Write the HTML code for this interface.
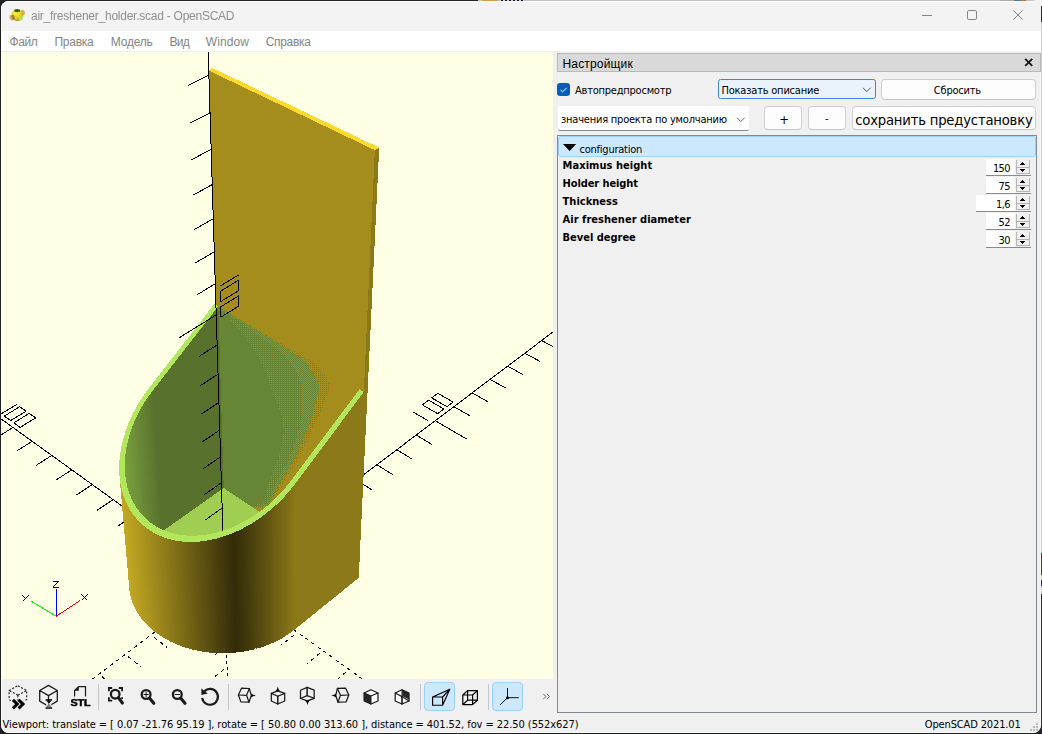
<!DOCTYPE html>
<html lang="ru"><head><meta charset="utf-8"><title>air_freshener_holder.scad - OpenSCAD</title>
<style>
html,body{margin:0;padding:0}
body{width:1042px;height:734px;overflow:hidden;background:#1f2023;position:relative;font-family:"Liberation Sans","DejaVu Sans",sans-serif;font-size:11px;color:#000}
.abs{position:absolute}
#top0{position:absolute;left:0;top:0;width:1042px;height:1px;background:#222326}
#win{position:absolute;left:1px;top:1px;width:1040px;height:732px;border-radius:8px;background:#f0f0f0;overflow:hidden;box-shadow:inset 0 0 0 1px #fbfbfb}
#titlebar{position:absolute;left:0;top:0;width:1040px;height:30px;background:#f3f3f3;box-shadow:inset 1px 1px 0 0 #fcfcfc;border-radius:8px 8px 0 0}
#menubar{position:absolute;left:0;top:30px;width:1040px;height:20px;background:#fff}
svg text{text-rendering:geometricPrecision}
.t{position:absolute;white-space:pre;line-height:1;transform-origin:0 0}
.gl{position:absolute;left:0px;top:51px}
.tb{position:absolute;top:681px;width:31px;height:29px;box-sizing:border-box;border-radius:4px}
.tb.on{background:#cce8ff;border:1px solid #99d1ff}
.tb svg{position:absolute;left:3px;top:2px}
.sep{position:absolute;top:683px;width:1px;height:26px;background:#c5c5c5}
.btn{position:absolute;box-sizing:border-box;background:#fdfdfd;border:1px solid #d0d0d0;border-bottom-color:#c4c4c4;border-radius:4px}
.spin{position:absolute;height:15px;background:#fff;border-bottom:1px solid #8a8a8a;box-sizing:content-box}
.spb{position:absolute;right:1px;top:1px;width:13px;height:14px;background:#f0f0f0;border:1px solid #c9c9c9;box-sizing:border-box}

</style></head>
<body>
<div id="top0"></div>
<div class="abs" style="left:478px;top:0;width:564px;height:1px;background:#c2c2c2"></div>
<div class="abs" style="left:482px;top:0;width:16px;height:1px;background:#c9a13f"></div>
<div class="abs" style="left:501px;top:0;width:23px;height:1px;background:repeating-linear-gradient(90deg,#1d1830 0 2px,#cfcfcf 2px 4px)"></div>
<div class="abs" style="left:1000px;top:0;width:14px;height:1px;background:#a9a9a9"></div>
<div class="abs" style="left:1014px;top:0;width:12px;height:1px;background:#5d7d96"></div>
<div class="abs" style="left:1022px;top:0;width:3px;height:1px;background:#c9761a"></div>
<div class="abs" style="left:1030px;top:0;width:12px;height:7px;background:#f4f4f4"></div>
<div class="abs" style="left:1041px;top:1px;width:1px;height:733px;background:linear-gradient(180deg,#f4f4f4 0 5px,#2a2a2d 5px 21px,#cdcdcd 21px 552px,#6b2c2c 552px 574px,#cdcdcd 574px 579px,#27305a 579px 585px,#cdcdcd 585px 593px,#2a2a2d 593px)"></div>
<div class="abs" style="left:1030px;top:0px;width:11px;height:10px;box-sizing:border-box;border-top:1px solid #c4c4c4;border-right:1px solid #b5b5b5;border-top-right-radius:9px"></div>
<div id="win">
<div id="titlebar">
<svg class="abs" style="left:7px;top:6px" width="20" height="18" viewBox="8 7 20 18">
<defs><radialGradient id="ball" cx="0.4" cy="0.35" r="0.7"><stop offset="0" stop-color="#fff23a"/><stop offset="0.6" stop-color="#e6cf1c"/><stop offset="1" stop-color="#8a7a10"/></radialGradient></defs>
<ellipse cx="11.8" cy="17.6" rx="2.4" ry="2.9" fill="#d6a570" opacity="0.9" transform="rotate(-25 11.8 17.6)"/>
<ellipse cx="22.9" cy="12.3" rx="2.1" ry="2.6" fill="#d6a570" opacity="0.9" transform="rotate(-25 22.9 12.3)"/>
<circle cx="17.3" cy="15" r="6" fill="url(#ball)"/>
<ellipse cx="17.1" cy="10.6" rx="3" ry="1.6" fill="#3f6314"/>
<ellipse cx="21" cy="17.8" rx="1.9" ry="2.8" fill="#b5e24e" transform="rotate(35 21 17.8)"/>
<ellipse cx="13.2" cy="17.2" rx="1.5" ry="2.4" fill="#8c8a2a" transform="rotate(-20 13.2 17.2)"/>
</svg>
<svg class="abs" style="left:915px;top:5px" width="120" height="20" viewBox="916 6 120 20"><g fill="none" stroke="#858585" stroke-width="1">
<path d="M922 15.5 H932"/><rect x="967.5" y="10.5" width="9" height="9" rx="1.3"/><path d="M1013.3 10.3 L1022.7 19.7 M1022.7 10.3 L1013.3 19.7"/></g></svg>
</div>
<div id="menubar"></div>
<svg class="gl" width="552" height="627" viewBox="0 0 552 627" shape-rendering="crispEdges">
<defs>
<pattern id="pa" width="2" height="2" patternUnits="userSpaceOnUse"><rect width="2" height="2" fill="#678635"/><rect x="0" y="0" width="1" height="1" fill="#a48d1d"/></pattern>
<pattern id="pb" width="2" height="2" patternUnits="userSpaceOnUse"><rect width="2" height="2" fill="#678635"/><rect x="0" y="0" width="1" height="1" fill="#a48d1d"/><rect x="1" y="1" width="1" height="1" fill="#a48d1d"/></pattern>
<pattern id="pc" width="2" height="2" patternUnits="userSpaceOnUse"><rect width="2" height="2" fill="#a48d1d"/><rect x="1" y="1" width="1" height="1" fill="#678635"/></pattern>

<clipPath id="zc"><path d="M-10,-10 H600 V700 H-10 Z M123.76,413.72 L123.77,415.34 L123.81,416.96 L123.88,418.58 L123.98,420.18 L124.10,421.77 L124.25,423.35 L124.43,424.92 L124.65,426.48 L124.88,428.03 L125.15,429.56 L125.45,431.09 L125.77,432.60 L126.13,434.09 L126.51,435.58 L126.92,437.04 L127.36,438.50 L127.83,439.93 L128.32,441.36 L128.85,442.76 L129.40,444.15 L129.98,445.52 L130.59,446.88 L131.22,448.21 L131.88,449.53 L132.57,450.83 L133.29,452.10 L134.03,453.36 L134.81,454.60 L135.60,455.82 L136.43,457.01 L137.28,458.19 L138.15,459.34 L139.06,460.47 L139.98,461.58 L140.94,462.67 L141.91,463.73 L142.92,464.76 L143.94,465.78 L145.00,466.77 L146.07,467.73 L147.17,468.67 L148.29,469.58 L149.44,470.47 L150.61,471.33 L151.80,472.16 L153.01,472.97 L154.25,473.75 L155.50,474.50 L156.78,475.22 L158.08,475.92 L159.40,476.59 L160.74,477.23 L162.09,477.84 L163.47,478.42 L164.87,478.97 L166.28,479.49 L167.71,479.98 L169.16,480.45 L170.63,480.88 L172.11,481.28 L173.61,481.65 L175.12,481.99 L176.65,482.30 L178.20,482.58 L179.75,482.83 L181.33,483.05 L182.91,483.23 L184.51,483.38 L186.12,483.51 L187.74,483.60 L189.37,483.65 L191.02,483.68 L192.67,483.68 L194.33,483.64 L196.01,483.57 L197.69,483.47 L199.38,483.34 L201.07,483.17 L202.78,482.97 L204.49,482.74 L206.20,482.48 L207.92,482.19 L209.65,481.87 L211.37,481.51 L213.11,481.12 L214.84,480.71 L216.58,480.25 L218.32,479.77 L220.06,479.26 L221.80,478.72 L223.54,478.14 L225.28,477.54 L227.02,476.90 L228.76,476.24 L230.49,475.54 L232.23,474.82 L233.96,474.06 L235.68,473.28 L237.40,472.46 L239.11,471.62 L240.82,470.75 L242.53,469.85 L244.22,468.92 L245.91,467.97 L247.59,466.98 L249.26,465.97 L250.92,464.94 L252.57,463.87 L254.21,462.78 L255.85,461.67 L257.46,460.53 L259.07,459.36 L260.67,458.17 L262.25,456.96 L263.81,455.72 L265.37,454.46 L266.91,453.18 L268.43,451.87 L269.94,450.54 L271.43,449.20 L272.90,447.82 L274.36,446.43 L275.80,445.02 L277.22,443.59 L278.62,442.14 L280.00,440.67 L281.37,439.18 L282.71,437.68 L284.03,436.16 L285.34,434.62 L286.62,433.06 L287.88,431.49 L289.11,429.91 L290.33,428.31 L290.33,428.31 L358.37,337.36 L600,337.36 L600,700 L-10,700 L-10,413.72 Z" clip-rule="evenodd"/></clipPath>
</defs>
<rect width="552" height="627" fill="#ffffe5"/>
<g stroke="#000" stroke-width="1" fill="none">
<line x1="223.36" y1="527.68" x2="865.03" y2="43.99" />
<line x1="223.36" y1="527.68" x2="-426.46" y2="59.87" />
<line x1="223.36" y1="527.68" x2="239.22" y2="539.10" />
<line x1="223.36" y1="527.68" x2="207.45" y2="539.67" />
<line x1="246.68" y1="510.10" x2="262.52" y2="521.26" />
<line x1="200.10" y1="510.93" x2="184.19" y2="522.66" />
<line x1="269.45" y1="492.94" x2="285.28" y2="503.83" />
<line x1="177.36" y1="494.56" x2="161.44" y2="506.03" />
<line x1="291.70" y1="476.17" x2="307.51" y2="486.81" />
<line x1="155.11" y1="478.54" x2="139.19" y2="489.76" />
<line x1="313.45" y1="459.77" x2="329.24" y2="470.18" />
<line x1="133.34" y1="462.87" x2="117.43" y2="473.85" />
<line x1="334.71" y1="443.75" x2="350.48" y2="453.92" />
<line x1="112.04" y1="447.54" x2="96.14" y2="458.28" />
<line x1="355.50" y1="428.07" x2="371.24" y2="438.02" />
<line x1="91.19" y1="432.52" x2="75.30" y2="443.04" />
<line x1="375.83" y1="412.75" x2="391.54" y2="422.48" />
<line x1="70.77" y1="417.83" x2="54.90" y2="428.12" />
<line x1="395.73" y1="397.75" x2="411.40" y2="407.27" />
<line x1="50.78" y1="403.44" x2="34.93" y2="413.52" />
<line x1="415.20" y1="383.07" x2="430.84" y2="392.39" />
<line x1="31.20" y1="389.34" x2="15.37" y2="399.21" />
<line x1="434.25" y1="368.71" x2="465.67" y2="387.07" />
<line x1="12.01" y1="375.53" x2="-19.83" y2="395.02" />
<line x1="452.91" y1="354.65" x2="468.47" y2="363.58" />
<line x1="-6.79" y1="361.99" x2="-22.57" y2="371.47" />
<line x1="471.18" y1="340.88" x2="486.70" y2="349.62" />
<line x1="-25.21" y1="348.73" x2="-40.96" y2="358.02" />
<line x1="489.07" y1="327.39" x2="504.55" y2="335.95" />
<line x1="-43.28" y1="335.72" x2="-59.00" y2="344.83" />
<line x1="506.60" y1="314.18" x2="522.03" y2="322.57" />
<line x1="-60.99" y1="322.97" x2="-76.68" y2="331.91" />
<line x1="523.77" y1="301.23" x2="539.16" y2="309.45" />
<line x1="-78.36" y1="310.47" x2="-94.01" y2="319.23" />
<line x1="540.61" y1="288.54" x2="555.95" y2="296.60" />
<line x1="-95.39" y1="298.20" x2="-111.01" y2="306.80" />
<line x1="557.11" y1="276.10" x2="572.40" y2="284.00" />
<line x1="-112.11" y1="286.17" x2="-127.69" y2="294.60" />
<line x1="573.29" y1="263.91" x2="588.53" y2="271.65" />
<line x1="-128.51" y1="274.37" x2="-144.05" y2="282.64" />
<line x1="589.15" y1="251.95" x2="604.35" y2="259.54" />
<line x1="-144.60" y1="262.78" x2="-160.11" y2="270.90" />
<line x1="604.71" y1="240.22" x2="635.19" y2="255.21" />
<line x1="-160.40" y1="251.41" x2="-191.53" y2="267.45" />
<line x1="619.98" y1="228.71" x2="635.07" y2="236.02" />
<line x1="-175.91" y1="240.24" x2="-191.33" y2="248.06" />
<line x1="634.96" y1="217.42" x2="650.00" y2="224.59" />
<line x1="-191.14" y1="229.28" x2="-206.52" y2="236.96" />
<line x1="649.66" y1="206.34" x2="664.65" y2="213.37" />
<line x1="-206.10" y1="218.51" x2="-221.43" y2="226.05" />
<line x1="664.09" y1="195.46" x2="679.02" y2="202.37" />
<line x1="-220.79" y1="207.93" x2="-236.08" y2="215.34" />
<line x1="678.25" y1="184.78" x2="693.13" y2="191.57" />
<line x1="-235.22" y1="197.54" x2="-250.46" y2="204.82" />
<line x1="692.16" y1="174.30" x2="706.99" y2="180.96" />
<line x1="-249.40" y1="187.33" x2="-264.60" y2="194.49" />
<line x1="705.82" y1="164.00" x2="720.59" y2="170.54" />
<line x1="-263.34" y1="177.30" x2="-278.49" y2="184.33" />
<line x1="719.23" y1="153.89" x2="733.95" y2="160.32" />
<line x1="-277.03" y1="167.44" x2="-292.13" y2="174.35" />
<line x1="732.41" y1="143.96" x2="747.07" y2="150.27" />
<line x1="-290.49" y1="157.75" x2="-305.55" y2="164.54" />
<line x1="745.36" y1="134.20" x2="774.73" y2="146.67" />
<line x1="-303.73" y1="148.22" x2="-333.92" y2="161.66" />
<line x1="758.08" y1="124.61" x2="772.63" y2="130.70" />
<line x1="-316.74" y1="138.85" x2="-331.70" y2="145.42" />
<line x1="770.59" y1="115.18" x2="785.07" y2="121.17" />
<line x1="-329.54" y1="129.64" x2="-344.45" y2="136.10" />
<line x1="782.88" y1="105.92" x2="797.31" y2="111.80" />
<line x1="-342.13" y1="120.58" x2="-356.99" y2="126.93" />
<line x1="794.96" y1="96.81" x2="809.33" y2="102.60" />
<line x1="-354.51" y1="111.66" x2="-369.32" y2="117.91" />
<line x1="806.84" y1="87.85" x2="821.16" y2="93.54" />
<line x1="-366.69" y1="102.89" x2="-381.45" y2="109.04" />
<line x1="818.53" y1="79.05" x2="832.78" y2="84.64" />
<line x1="-378.68" y1="94.27" x2="-393.38" y2="100.32" />
<line x1="830.02" y1="70.39" x2="844.22" y2="75.89" />
<line x1="-390.48" y1="85.77" x2="-405.13" y2="91.73" />
<line x1="841.32" y1="61.87" x2="855.46" y2="67.28" />
<line x1="-402.08" y1="77.42" x2="-416.69" y2="83.28" />
<line x1="852.44" y1="53.48" x2="866.53" y2="58.81" />
<line x1="-413.51" y1="69.19" x2="-428.06" y2="74.96" />
<line x1="411.88" y1="359.83" x2="427.22" y2="368.82" />
<line x1="421.34" y1="352.83" x2="427.60" y2="348.20" />
<line x1="427.60" y1="348.20" x2="442.92" y2="357.04" />
<line x1="442.92" y1="357.04" x2="436.67" y2="361.73" />
<line x1="436.67" y1="361.73" x2="421.34" y2="352.83" />
<line x1="430.71" y1="345.90" x2="436.90" y2="341.32" />
<line x1="436.90" y1="341.32" x2="452.20" y2="350.07" />
<line x1="452.20" y1="350.07" x2="446.02" y2="354.71" />
<line x1="446.02" y1="354.71" x2="430.71" y2="345.90" />
<line x1="583.45" y1="232.95" x2="588.63" y2="229.12" />
<line x1="588.63" y1="229.12" x2="594.20" y2="231.85" />
<line x1="594.20" y1="231.85" x2="589.02" y2="235.70" />
<line x1="589.02" y1="235.70" x2="598.37" y2="240.31" />
<line x1="598.37" y1="240.31" x2="603.53" y2="236.43" />
<line x1="591.20" y1="227.22" x2="596.33" y2="223.42" />
<line x1="596.33" y1="223.42" x2="611.21" y2="230.67" />
<line x1="611.21" y1="230.67" x2="606.10" y2="234.51" />
<line x1="606.10" y1="234.51" x2="591.20" y2="227.22" />
<line x1="598.88" y1="221.54" x2="603.96" y2="217.78" />
<line x1="603.96" y1="217.78" x2="618.82" y2="224.95" />
<line x1="618.82" y1="224.95" x2="613.76" y2="228.76" />
<line x1="613.76" y1="228.76" x2="598.88" y2="221.54" />
<line x1="725.17" y1="128.14" x2="729.49" y2="124.95" />
<line x1="729.49" y1="124.95" x2="743.88" y2="131.05" />
<line x1="743.88" y1="131.05" x2="739.58" y2="134.28" />
<line x1="730.56" y1="130.44" x2="734.87" y2="127.23" />
<line x1="731.64" y1="123.36" x2="735.92" y2="120.20" />
<line x1="735.92" y1="120.20" x2="750.28" y2="126.24" />
<line x1="750.28" y1="126.24" x2="746.02" y2="129.44" />
<line x1="746.02" y1="129.44" x2="731.64" y2="123.36" />
<line x1="738.05" y1="118.62" x2="742.29" y2="115.49" />
<line x1="742.29" y1="115.49" x2="756.63" y2="121.48" />
<line x1="756.63" y1="121.48" x2="752.40" y2="124.65" />
<line x1="752.40" y1="124.65" x2="738.05" y2="118.62" />
<line x1="844.21" y1="40.11" x2="849.40" y2="42.05" />
<line x1="849.40" y1="42.05" x2="853.04" y2="39.34" />
<line x1="847.87" y1="37.41" x2="861.71" y2="42.57" />
<line x1="849.69" y1="36.07" x2="853.31" y2="33.38" />
<line x1="853.31" y1="33.38" x2="867.13" y2="38.50" />
<line x1="867.13" y1="38.50" x2="863.52" y2="41.21" />
<line x1="863.52" y1="41.21" x2="849.69" y2="36.07" />
<line x1="855.12" y1="32.05" x2="858.72" y2="29.39" />
<line x1="858.72" y1="29.39" x2="872.50" y2="34.47" />
<line x1="872.50" y1="34.47" x2="868.92" y2="37.15" />
<line x1="868.92" y1="37.15" x2="855.12" y2="32.05" />
<line x1="34.64" y1="365.87" x2="28.28" y2="361.38" />
<line x1="28.28" y1="361.38" x2="12.75" y2="370.85" />
<line x1="12.75" y1="370.85" x2="19.11" y2="375.41" />
<line x1="19.11" y1="375.41" x2="34.64" y2="365.87" />
<line x1="25.11" y1="359.14" x2="18.81" y2="354.69" />
<line x1="18.81" y1="354.69" x2="3.30" y2="364.07" />
<line x1="3.30" y1="364.07" x2="9.59" y2="368.59" />
<line x1="9.59" y1="368.59" x2="25.11" y2="359.14" />
<line x1="15.68" y1="352.48" x2="0.17" y2="361.83" />
<line x1="-138.72" y1="243.44" x2="-143.98" y2="239.73" />
<line x1="-143.98" y1="239.73" x2="-159.18" y2="247.55" />
<line x1="-159.18" y1="247.55" x2="-153.94" y2="251.31" />
<line x1="-153.94" y1="251.31" x2="-138.72" y2="243.44" />
<line x1="-146.59" y1="237.89" x2="-151.80" y2="234.21" />
<line x1="-151.80" y1="234.21" x2="-166.99" y2="241.96" />
<line x1="-166.99" y1="241.96" x2="-161.79" y2="245.68" />
<line x1="-161.79" y1="245.68" x2="-146.59" y2="237.89" />
<line x1="-154.39" y1="232.38" x2="-159.55" y2="228.74" />
<line x1="-159.55" y1="228.74" x2="-165.21" y2="231.61" />
<line x1="-165.21" y1="231.61" x2="-160.06" y2="235.27" />
<line x1="-160.06" y1="235.27" x2="-169.57" y2="240.10" />
<line x1="-169.57" y1="240.10" x2="-174.72" y2="236.41" />
<line x1="-283.01" y1="141.54" x2="-287.42" y2="138.43" />
<line x1="-287.42" y1="138.43" x2="-302.20" y2="144.99" />
<line x1="-302.20" y1="144.99" x2="-297.81" y2="148.14" />
<line x1="-297.81" y1="148.14" x2="-283.01" y2="141.54" />
<line x1="-289.62" y1="136.88" x2="-294.00" y2="133.79" />
<line x1="-294.00" y1="133.79" x2="-308.75" y2="140.30" />
<line x1="-308.75" y1="140.30" x2="-304.39" y2="143.42" />
<line x1="-304.39" y1="143.42" x2="-289.62" y2="136.88" />
<line x1="-296.17" y1="132.25" x2="-300.51" y2="129.19" />
<line x1="-300.51" y1="129.19" x2="-315.24" y2="135.64" />
<line x1="-315.24" y1="135.64" x2="-310.92" y2="138.74" />
<line x1="-301.68" y1="134.68" x2="-306.01" y2="131.60" />
<line x1="-404.98" y1="55.41" x2="-408.74" y2="52.76" />
<line x1="-408.74" y1="52.76" x2="-423.03" y2="58.34" />
<line x1="-423.03" y1="58.34" x2="-419.29" y2="61.03" />
<line x1="-419.29" y1="61.03" x2="-404.98" y2="55.41" />
<line x1="-410.61" y1="51.44" x2="-414.33" y2="48.80" />
<line x1="-414.33" y1="48.80" x2="-428.60" y2="54.35" />
<line x1="-428.60" y1="54.35" x2="-424.89" y2="57.01" />
<line x1="-424.89" y1="57.01" x2="-410.61" y2="51.44" />
<line x1="-416.19" y1="47.49" x2="-421.52" y2="49.56" />
<line x1="-421.52" y1="49.56" x2="-425.21" y2="46.94" />
<line x1="-419.89" y1="44.88" x2="-434.13" y2="50.38" />
</g>
<g stroke="#000" stroke-width="1" fill="none">
<line x1="223.36" y1="527.68" x2="-572.21" y2="1127.37" stroke-dasharray="3.76 3.76" stroke-dashoffset="3.76"/>
<line x1="223.36" y1="527.68" x2="1001.79" y2="1088.07" stroke-dasharray="3.70 3.70" stroke-dashoffset="3.70"/>
<line x1="223.36" y1="527.68" x2="230.66" y2="765.78" stroke-dasharray="3.00 3.00" stroke-dashoffset="3.00"/>
<line x1="223.36" y1="527.68" x2="239.22" y2="539.10" stroke-dasharray="3.70 3.70" stroke-dashoffset="3.70"/>
<line x1="223.36" y1="527.68" x2="207.45" y2="539.67" stroke-dasharray="3.76 3.76" stroke-dashoffset="3.76"/>
<line x1="223.36" y1="527.68" x2="207.45" y2="539.67" stroke-dasharray="3.76 3.76" stroke-dashoffset="3.76"/>
<line x1="199.49" y1="545.67" x2="215.36" y2="557.37" stroke-dasharray="3.73 3.73" stroke-dashoffset="3.73"/>
<line x1="247.15" y1="544.80" x2="231.25" y2="557.08" stroke-dasharray="3.79 3.79" stroke-dashoffset="3.79"/>
<line x1="224.06" y1="550.32" x2="208.36" y2="562.34" stroke-dasharray="3.78 3.78" stroke-dashoffset="3.78"/>
<line x1="175.04" y1="564.11" x2="190.91" y2="576.09" stroke-dasharray="3.76 3.76" stroke-dashoffset="3.76"/>
<line x1="271.49" y1="562.33" x2="255.60" y2="574.88" stroke-dasharray="3.82 3.82" stroke-dashoffset="3.82"/>
<line x1="224.73" y1="572.38" x2="209.25" y2="584.41" stroke-dasharray="3.80 3.80" stroke-dashoffset="3.80"/>
<line x1="149.98" y1="582.99" x2="165.85" y2="595.27" stroke-dasharray="3.79 3.79" stroke-dashoffset="3.79"/>
<line x1="296.40" y1="580.26" x2="280.53" y2="593.11" stroke-dasharray="3.86 3.86" stroke-dashoffset="3.86"/>
<line x1="225.39" y1="593.87" x2="210.11" y2="605.90" stroke-dasharray="3.82 3.82" stroke-dashoffset="3.82"/>
<line x1="124.31" y1="602.35" x2="140.17" y2="614.93" stroke-dasharray="3.83 3.83" stroke-dashoffset="3.83"/>
<line x1="321.90" y1="598.62" x2="306.05" y2="611.78" stroke-dasharray="3.90 3.90" stroke-dashoffset="3.90"/>
<line x1="226.03" y1="614.81" x2="210.95" y2="626.85" stroke-dasharray="3.84 3.84" stroke-dashoffset="3.84"/>
<line x1="97.98" y1="622.19" x2="113.83" y2="635.10" stroke-dasharray="3.87 3.87" stroke-dashoffset="3.87"/>
<line x1="348.01" y1="617.41" x2="332.19" y2="630.89" stroke-dasharray="3.94 3.94" stroke-dashoffset="3.94"/>
<line x1="226.66" y1="635.23" x2="211.77" y2="647.27" stroke-dasharray="3.86 3.86" stroke-dashoffset="3.86"/>
<line x1="70.98" y1="642.54" x2="86.82" y2="655.78" stroke-dasharray="3.91 3.91" stroke-dashoffset="3.91"/>
<line x1="374.75" y1="636.66" x2="358.97" y2="650.47" stroke-dasharray="3.99 3.99" stroke-dashoffset="3.99"/>
<line x1="227.27" y1="655.14" x2="212.57" y2="667.19" stroke-dasharray="3.88 3.88" stroke-dashoffset="3.88"/>
<line x1="43.29" y1="663.42" x2="59.10" y2="677.00" stroke-dasharray="3.96 3.96" stroke-dashoffset="3.96"/>
<line x1="402.15" y1="656.38" x2="386.41" y2="670.54" stroke-dasharray="4.03 4.03" stroke-dashoffset="4.03"/>
<line x1="227.86" y1="674.57" x2="213.35" y2="686.61" stroke-dasharray="3.90 3.90" stroke-dashoffset="3.90"/>
<line x1="14.87" y1="684.84" x2="30.65" y2="698.79" stroke-dasharray="4.00 4.00" stroke-dashoffset="4.00"/>
<line x1="430.22" y1="676.60" x2="414.54" y2="691.10" stroke-dasharray="4.09 4.09" stroke-dashoffset="4.09"/>
<line x1="228.44" y1="693.53" x2="214.11" y2="705.56" stroke-dasharray="3.92 3.92" stroke-dashoffset="3.92"/>
<line x1="-14.31" y1="706.83" x2="1.44" y2="721.15" stroke-dasharray="4.06 4.06" stroke-dashoffset="4.06"/>
<line x1="459.01" y1="697.32" x2="443.38" y2="712.19" stroke-dasharray="4.14 4.14" stroke-dashoffset="4.14"/>
<line x1="229.01" y1="712.04" x2="214.86" y2="724.05" stroke-dasharray="3.94 3.94" stroke-dashoffset="3.94"/>
<line x1="-44.27" y1="729.42" x2="-12.60" y2="759.10" stroke-dasharray="4.11 4.11" stroke-dashoffset="4.11"/>
<line x1="488.52" y1="718.57" x2="457.11" y2="749.36" stroke-dasharray="4.20 4.20" stroke-dashoffset="4.20"/>
<line x1="229.56" y1="730.11" x2="201.40" y2="754.28" stroke-dasharray="3.95 3.95" stroke-dashoffset="3.95"/>
<line x1="-75.05" y1="752.62" x2="-59.40" y2="767.73" stroke-dasharray="4.17 4.17" stroke-dashoffset="4.17"/>
<line x1="518.80" y1="740.36" x2="503.31" y2="756.02" stroke-dasharray="4.22 4.22" stroke-dashoffset="4.22"/>
<line x1="230.10" y1="747.76" x2="216.29" y2="759.74" stroke-dasharray="3.97 3.97" stroke-dashoffset="3.97"/>
<line x1="-106.67" y1="776.46" x2="-91.09" y2="792.00" stroke-dasharray="4.24 4.24" stroke-dashoffset="4.24"/>
<line x1="549.86" y1="762.73" x2="534.46" y2="778.80" stroke-dasharray="4.16 4.16" stroke-dashoffset="4.16"/>
<line x1="230.63" y1="765.00" x2="216.98" y2="776.97" stroke-dasharray="3.99 3.99" stroke-dashoffset="3.99"/>
<line x1="-139.19" y1="800.97" x2="-123.68" y2="816.95" stroke-dasharray="4.18 4.18" stroke-dashoffset="4.18"/>
<line x1="581.75" y1="785.68" x2="566.44" y2="802.18" stroke-dasharray="4.09 4.09" stroke-dashoffset="4.09"/>
<line x1="231.15" y1="781.86" x2="217.66" y2="793.80" stroke-dasharray="4.01 4.01" stroke-dashoffset="4.01"/>
<line x1="-172.63" y1="826.17" x2="-157.20" y2="842.62" stroke-dasharray="4.11 4.11" stroke-dashoffset="4.11"/>
<line x1="614.50" y1="809.26" x2="599.29" y2="826.21" stroke-dasharray="4.03 4.03" stroke-dashoffset="4.03"/>
<line x1="231.65" y1="798.33" x2="218.32" y2="810.24" stroke-dasharray="4.02 4.02" stroke-dashoffset="4.02"/>
<line x1="-207.03" y1="852.11" x2="-191.70" y2="869.03" stroke-dasharray="4.05 4.05" stroke-dashoffset="4.05"/>
<line x1="648.14" y1="833.47" x2="633.04" y2="850.89" stroke-dasharray="3.97 3.97" stroke-dashoffset="3.97"/>
<line x1="232.15" y1="814.44" x2="218.97" y2="826.32" stroke-dasharray="4.04 4.04" stroke-dashoffset="4.04"/>
<line x1="-242.44" y1="878.80" x2="-227.22" y2="896.22" stroke-dasharray="3.98 3.98" stroke-dashoffset="3.98"/>
<line x1="682.70" y1="858.35" x2="667.73" y2="876.25" stroke-dasharray="3.91 3.91" stroke-dashoffset="3.91"/>
<line x1="232.63" y1="830.19" x2="219.60" y2="842.05" stroke-dasharray="4.06 4.06" stroke-dashoffset="4.06"/>
<line x1="-278.91" y1="906.29" x2="-263.80" y2="924.23" stroke-dasharray="3.92 3.92" stroke-dashoffset="3.92"/>
<line x1="718.23" y1="883.93" x2="703.40" y2="902.34" stroke-dasharray="3.85 3.85" stroke-dashoffset="3.85"/>
<line x1="233.10" y1="845.60" x2="220.22" y2="857.43" stroke-dasharray="4.07 4.07" stroke-dashoffset="4.07"/>
<line x1="-316.47" y1="934.60" x2="-301.50" y2="953.10" stroke-dasharray="3.86 3.86" stroke-dashoffset="3.86"/>
<line x1="754.76" y1="910.23" x2="740.10" y2="929.17" stroke-dasharray="3.79 3.79" stroke-dashoffset="3.79"/>
<line x1="233.56" y1="860.67" x2="220.82" y2="872.47" stroke-dasharray="4.09 4.09" stroke-dashoffset="4.09"/>
<line x1="-355.18" y1="963.78" x2="-340.36" y2="982.85" stroke-dasharray="3.80 3.80" stroke-dashoffset="3.80"/>
<line x1="792.35" y1="937.29" x2="777.85" y2="956.78" stroke-dasharray="3.74 3.74" stroke-dashoffset="3.74"/>
<line x1="234.02" y1="875.43" x2="221.41" y2="887.19" stroke-dasharray="4.10 4.10" stroke-dashoffset="4.10"/>
<line x1="-395.10" y1="993.87" x2="-365.50" y2="1033.60" stroke-dasharray="3.74 3.74" stroke-dashoffset="3.74"/>
<line x1="831.03" y1="965.14" x2="802.11" y2="1005.68" stroke-dasharray="3.69 3.69" stroke-dashoffset="3.69"/>
<line x1="234.46" y1="889.87" x2="209.37" y2="913.49" stroke-dasharray="4.12 4.12" stroke-dashoffset="4.12"/>
</g>
<polygon points="220.22,437.83 354.22,528.66 373.83,98.13 207.27,18.34" fill="#a48d1d" />
<polygon points="207.27,18.34 373.83,98.13 378.19,95.60 211.67,16.16" fill="#fcda2d" />
<polygon points="357.74,525.81 378.19,95.60 373.83,98.13 354.22,528.66" fill="#8c7919" />
<!--ZF-->
<clipPath id="zfc"><polygon points="221.72,437.46 351.39,523.77 359.37,337.36 216.37,254.13"/></clipPath>
<g clip-path="url(#zfc)">
<polygon points="190.0,240.0 224.0,257.5 229.1,260.5 236.3,264.6 244.7,269.5 253.3,274.5 261.0,279.0 268.1,283.2 275.2,287.3 282.0,291.4 288.4,295.1 294.0,298.5 298.8,301.2 302.8,303.2 306.4,305.1 309.7,307.2 313.0,310.0 316.5,313.8 320.1,318.3 323.3,323.0 326.1,327.4 328.0,331.0 328.9,333.4 329.0,335.1 328.5,336.4 327.8,337.9 327.0,340.0 326.2,342.9 325.1,346.2 323.8,349.8 322.4,353.5 321.0,357.0 319.5,360.4 317.9,363.8 316.3,367.2 314.6,370.6 313.0,374.0 311.4,377.4 309.8,380.8 308.2,384.2 306.6,387.6 305.0,391.0 303.5,394.3 302.1,397.6 300.6,400.9 299.0,404.3 297.0,408.0 294.6,411.9 291.8,415.9 288.9,420.1 285.9,424.5 283.0,429.0 280.0,434.1 276.7,439.9 273.6,445.6 270.9,450.5 269.0,454.0 190.0,470.0" fill="url(#pc)"/>
<polygon points="190.0,240.0 223.4,257.4 228.0,260.3 234.4,264.4 241.9,269.1 249.6,273.9 256.5,278.2 262.8,282.2 269.1,286.2 275.1,290.1 280.7,293.7 285.8,296.9 290.0,299.6 293.7,301.7 296.9,303.6 299.9,305.8 302.9,308.6 306.2,312.4 309.4,316.8 312.5,321.4 315.1,325.7 316.9,329.4 317.9,332.0 318.1,333.9 317.9,335.5 317.4,337.2 316.9,339.6 316.5,342.5 315.9,345.8 315.1,349.4 314.3,353.0 313.4,356.6 312.4,360.0 311.3,363.5 310.1,367.0 308.9,370.5 307.6,374.0 306.3,377.4 305.0,380.8 303.6,384.2 302.2,387.6 300.8,391.0 299.4,394.3 298.1,397.6 296.8,400.9 295.2,404.4 293.4,408.0 291.2,411.8 288.7,415.8 286.0,419.8 283.2,424.1 280.6,428.6 277.8,433.6 274.9,439.4 272.0,445.0 269.5,450.0 267.8,453.4 190.0,470.0" fill="url(#pb)"/>
<polygon points="190.0,240.0 222.4,257.3 226.1,260.0 231.3,263.9 237.3,268.3 243.5,272.9 249.0,277.0 254.0,280.7 258.9,284.3 263.6,287.9 268.0,291.2 272.0,294.3 275.4,296.9 278.4,299.1 281.1,301.2 283.6,303.5 286.2,306.4 288.9,310.0 291.7,314.3 294.4,318.7 296.7,322.9 298.4,326.6 299.4,329.5 299.9,331.8 300.1,334.0 300.1,336.2 300.2,338.8 300.4,341.9 300.6,345.2 300.7,348.7 300.7,352.2 300.6,355.8 300.4,359.4 300.1,363.1 299.7,366.7 299.2,370.4 298.6,374.0 297.8,377.5 297.0,380.9 296.0,384.3 294.9,387.6 293.8,391.0 292.7,394.4 291.6,397.7 290.4,401.0 289.0,404.4 287.4,408.0 285.5,411.7 283.4,415.5 281.1,419.4 278.8,423.5 276.6,427.8 274.3,432.8 271.8,438.5 269.3,444.1 267.3,449.0 265.8,452.4 190.0,470.0" fill="url(#pa)"/>
<polygon points="190.0,240.0 220.6,257.1 222.7,259.5 225.6,263.0 229.1,267.0 232.5,271.1 235.5,274.8 238.1,277.9 240.6,281.0 242.9,283.9 245.1,286.8 247.2,289.6 249.2,292.2 251.0,294.5 252.7,296.9 254.3,299.4 256.1,302.4 257.9,305.8 259.8,309.8 261.8,313.9 263.5,317.9 265.1,321.6 266.3,325.0 267.2,328.2 268.1,331.2 269.0,334.3 270.1,337.4 271.4,340.7 273.0,344.0 274.7,347.4 276.3,350.9 277.6,354.4 278.9,358.2 280.0,362.2 281.1,366.2 281.9,370.2 282.4,374.0 282.6,377.6 282.5,381.0 282.2,384.3 281.8,387.6 281.2,391.0 280.5,394.4 279.7,397.7 278.8,401.1 277.7,404.5 276.6,408.0 275.3,411.5 273.9,415.0 272.4,418.6 270.9,422.4 269.4,426.4 267.8,431.3 266.2,436.9 264.6,442.4 263.2,447.2 262.2,450.6 190.0,470.0" fill="#678635"/>
</g>
<polygon points="222.72,435.96 161.23,479.46 161.23,479.46 160.13,480.25 159.05,481.05 157.99,481.87 156.94,482.70 155.92,483.54 154.91,484.40 153.92,485.27 152.96,486.15 152.01,487.04 151.08,487.95 150.17,488.87 149.28,489.80 148.41,490.74 147.57,491.69 146.74,492.66 145.94,493.63 145.16,494.61 144.40,495.61 143.67,496.61 142.95,497.63 142.26,498.65 141.60,499.68 140.95,500.72 140.33,501.77 139.74,502.83 139.17,503.89 138.62,504.97 138.10,506.05 137.60,507.13 137.13,508.23 136.68,509.33 136.26,510.44 135.86,511.55 135.49,512.67 135.15,513.79 134.83,514.92 134.54,516.05 134.28,517.18 134.04,518.32 133.83,519.47 133.64,520.61 133.48,521.76 133.35,522.91 133.25,524.07 133.17,525.22 133.12,526.38 133.10,527.54 133.11,528.70 133.14,529.86 133.20,531.02 133.29,532.18 133.41,533.33 133.55,534.49 133.73,535.65 133.93,536.80 134.15,537.95 134.41,539.10 134.69,540.25 135.00,541.39 135.34,542.53 135.71,543.66 136.10,544.79 136.52,545.92 136.97,547.04 137.45,548.16 137.95,549.27 138.48,550.37 139.04,551.47 139.62,552.56 140.24,553.64 140.87,554.71 141.54,555.78 142.23,556.84 142.95,557.89 143.69,558.93 144.46,559.96 145.25,560.98 146.07,561.99 146.92,562.99 147.79,563.98 148.68,564.96 149.60,565.93 150.55,566.88 151.51,567.83 152.51,568.76 153.52,569.67 154.56,570.58 155.62,571.47 156.70,572.34 157.81,573.21 158.93,574.05 160.08,574.89 161.25,575.70 162.44,576.51 163.65,577.29 164.88,578.06 166.13,578.82 167.40,579.55 168.69,580.27 170.00,580.98 171.33,581.66 172.67,582.33 174.03,582.98 175.40,583.61 176.80,584.23 178.21,584.82 179.63,585.40 181.07,585.96 182.52,586.50 183.99,587.01 185.47,587.51 186.96,587.99 188.47,588.45 189.99,588.89 191.52,589.31 193.06,589.71 194.61,590.08 196.17,590.44 197.74,590.78 199.31,591.09 200.90,591.38 202.49,591.65 204.10,591.91 205.70,592.13 207.32,592.34 208.94,592.53 210.56,592.69 212.19,592.83 213.82,592.95 215.46,593.05 217.10,593.12 218.74,593.18 220.38,593.21 222.02,593.22 223.67,593.21 225.31,593.17 226.95,593.12 228.60,593.04 230.23,592.94 231.87,592.82 233.51,592.67 235.14,592.50 236.76,592.32 238.38,592.11 240.00,591.88 241.61,591.62 243.21,591.35 244.81,591.05 246.40,590.74 247.98,590.40 249.55,590.04 251.12,589.66 252.67,589.26 254.22,588.84 255.75,588.40 257.27,587.94 258.78,587.45 260.28,586.95 261.77,586.43 263.24,585.89 264.70,585.33 266.14,584.75 267.57,584.16 268.98,583.54 270.38,582.90 271.77,582.25 273.13,581.58 274.48,580.89 275.81,580.19 277.13,579.47 278.42,578.73 279.70,577.97 280.96,577.20 282.20,576.41 283.41,575.61 284.61,574.79 285.79,573.95 286.95,573.10 288.08,572.24 289.20,571.36 289.20,571.36 350.39,522.27" fill="#9fce52" />
<polygon points="222.72,435.96 217.37,254.13 152.06,338.26 161.23,479.46" fill="#58722d" />
<polygon points="161.23,479.46 160.13,480.25 150.91,339.75 152.06,338.26" fill="#59732e" />
<polygon points="160.13,480.25 159.05,481.05 149.79,341.25 150.91,339.75" fill="#5a742e" />
<polygon points="159.05,481.05 157.99,481.87 148.68,342.77 149.79,341.25" fill="#5b762f" />
<polygon points="157.99,481.87 156.94,482.70 147.60,344.30 148.68,342.77" fill="#5c7730" />
<polygon points="156.94,482.70 155.92,483.54 146.54,345.84 147.60,344.30" fill="#5e7930" />
<polygon points="155.92,483.54 154.91,484.40 145.49,347.40 146.54,345.84" fill="#5f7a31" />
<polygon points="154.91,484.40 153.92,485.27 144.47,348.96 145.49,347.40" fill="#607c31" />
<polygon points="153.92,485.27 152.96,486.15 143.47,350.54 144.47,348.96" fill="#617d32" />
<polygon points="152.96,486.15 152.01,487.04 142.49,352.12 143.47,350.54" fill="#627f33" />
<polygon points="152.01,487.04 151.08,487.95 141.54,353.71 142.49,352.12" fill="#638033" />
<polygon points="151.08,487.95 150.17,488.87 140.60,355.32 141.54,353.71" fill="#648234" />
<polygon points="150.17,488.87 149.28,489.80 139.69,356.93 140.60,355.32" fill="#658334" />
<polygon points="149.28,489.80 148.41,490.74 138.80,358.55 139.69,356.93" fill="#668435" />
<polygon points="148.41,490.74 147.57,491.69 137.94,360.18 138.80,358.55" fill="#678635" />
<polygon points="147.57,491.69 146.74,492.66 137.10,361.82 137.94,360.18" fill="#688736" />
<polygon points="146.74,492.66 145.94,493.63 136.28,363.46 137.10,361.82" fill="#698836" />
<polygon points="145.94,493.63 145.16,494.61 135.48,365.11 136.28,363.46" fill="#6a8937" />
<polygon points="145.16,494.61 144.40,495.61 134.71,366.77 135.48,365.11" fill="#6b8a37" />
<polygon points="144.40,495.61 143.67,496.61 133.97,368.43 134.71,366.77" fill="#6c8c38" />
<polygon points="143.67,496.61 142.95,497.63 133.25,370.10 133.97,368.43" fill="#6d8d38" />
<polygon points="142.95,497.63 142.26,498.65 132.55,371.77 133.25,370.10" fill="#6e8e39" />
<polygon points="142.26,498.65 141.60,499.68 131.88,373.44 132.55,371.77" fill="#6f8f39" />
<polygon points="141.60,499.68 140.95,500.72 131.23,375.12 131.88,373.44" fill="#6f9039" />
<polygon points="140.95,500.72 140.33,501.77 130.61,376.81 131.23,375.12" fill="#70913a" />
<polygon points="140.33,501.77 139.74,502.83 130.02,378.49 130.61,376.81" fill="#71923a" />
<polygon points="139.74,502.83 139.17,503.89 129.45,380.18 130.02,378.49" fill="#72933b" />
<polygon points="139.17,503.89 138.62,504.97 128.91,381.87 129.45,380.18" fill="#72943b" />
<polygon points="138.62,504.97 138.10,506.05 128.39,383.56 128.91,381.87" fill="#73953b" />
<polygon points="138.10,506.05 137.60,507.13 127.90,385.26 128.39,383.56" fill="#74953c" />
<polygon points="137.60,507.13 137.13,508.23 127.44,386.95 127.90,385.26" fill="#74963c" />
<polygon points="137.13,508.23 136.68,509.33 127.00,388.64 127.44,386.95" fill="#75973c" />
<polygon points="136.68,509.33 136.26,510.44 126.59,390.34 127.00,388.64" fill="#75983d" />
<polygon points="136.26,510.44 135.86,511.55 126.21,392.03 126.59,390.34" fill="#76983d" />
<polygon points="135.86,511.55 135.49,512.67 125.85,393.72 126.21,392.03" fill="#76993d" />
<polygon points="135.49,512.67 135.15,513.79 125.52,395.41 125.85,393.72" fill="#779a3d" />
<polygon points="135.15,513.79 134.83,514.92 125.22,397.09 125.52,395.41" fill="#779a3e" />
<polygon points="134.83,514.92 134.54,516.05 124.95,398.78 125.22,397.09" fill="#789b3e" />
<polygon points="134.54,516.05 134.28,517.18 124.71,400.46 124.95,398.78" fill="#789b3e" />
<polygon points="134.28,517.18 134.04,518.32 124.49,402.13 124.71,400.46" fill="#799c3e" />
<polygon points="134.04,518.32 133.83,519.47 124.30,403.80 124.49,402.13" fill="#799c3e" />
<polygon points="133.83,519.47 133.64,520.61 124.14,405.47 124.30,403.80" fill="#799d3f" />
<polygon points="133.64,520.61 133.48,521.76 124.01,407.13 124.14,405.47" fill="#7a9d3f" />
<polygon points="133.48,521.76 133.35,522.91 123.91,408.79 124.01,407.13" fill="#7a9d3f" />
<polygon points="133.35,522.91 133.25,524.07 123.83,410.44 123.91,408.79" fill="#7a9e3f" />
<polygon points="133.25,524.07 133.17,525.22 123.78,412.08 123.83,410.44" fill="#7a9e3f" />
<polygon points="133.17,525.22 133.12,526.38 123.76,413.72 123.78,412.08" fill="#7a9e3f" />
<polygon points="133.12,526.38 133.10,527.54 123.77,415.34 123.76,413.72" fill="#7b9e3f" />
<polygon points="133.10,527.54 133.11,528.70 123.81,416.96 123.77,415.34" fill="#7b9f3f" />
<polygon points="133.11,528.70 133.14,529.86 123.88,418.58 123.81,416.96" fill="#7b9f3f" />
<polygon points="133.14,529.86 133.20,531.02 123.98,420.18 123.88,418.58" fill="#7b9f3f" />
<polygon points="133.20,531.02 133.29,532.18 124.10,421.77 123.98,420.18" fill="#7b9f3f" />
<polygon points="128.24,536.37 128.36,537.60 118.70,425.82 118.54,424.15" fill="#c3a822" />
<polygon points="128.36,537.60 128.50,538.82 118.88,427.49 118.70,425.82" fill="#c3a822" />
<polygon points="128.50,538.82 128.68,540.05 119.10,429.14 118.88,427.49" fill="#c3a822" />
<polygon points="128.68,540.05 128.89,541.27 119.35,430.78 119.10,429.14" fill="#c3a822" />
<polygon points="128.89,541.27 129.12,542.49 119.63,432.41 119.35,430.78" fill="#c3a822" />
<polygon points="129.12,542.49 129.39,543.71 119.94,434.02 119.63,432.41" fill="#c3a822" />
<polygon points="129.39,543.71 129.68,544.93 120.28,435.62 119.94,434.02" fill="#c2a822" />
<polygon points="129.68,544.93 130.01,546.14 120.65,437.21 120.28,435.62" fill="#c2a822" />
<polygon points="130.01,546.14 130.36,547.35 121.05,438.78 120.65,437.21" fill="#c2a722" />
<polygon points="130.36,547.35 130.75,548.56 121.48,440.34 121.05,438.78" fill="#c1a722" />
<polygon points="130.75,548.56 131.16,549.76 121.95,441.88 121.48,440.34" fill="#c1a722" />
<polygon points="131.16,549.76 131.60,550.95 122.44,443.41 121.95,441.88" fill="#c0a622" />
<polygon points="131.60,550.95 132.07,552.14 122.96,444.91 122.44,443.41" fill="#c0a622" />
<polygon points="132.07,552.14 132.57,553.32 123.51,446.40 122.96,444.91" fill="#bfa522" />
<polygon points="132.57,553.32 133.10,554.50 124.09,447.88 123.51,446.40" fill="#bfa522" />
<polygon points="133.10,554.50 133.65,555.67 124.70,449.33 124.09,447.88" fill="#bea422" />
<polygon points="133.65,555.67 134.24,556.84 125.34,450.77 124.70,449.33" fill="#bea421" />
<polygon points="134.24,556.84 134.85,558.00 126.01,452.19 125.34,450.77" fill="#bda321" />
<polygon points="134.85,558.00 135.50,559.15 126.71,453.58 126.01,452.19" fill="#bca221" />
<polygon points="135.50,559.15 136.17,560.29 127.43,454.96 126.71,453.58" fill="#bba221" />
<polygon points="136.17,560.29 136.87,561.42 128.19,456.32 127.43,454.96" fill="#baa121" />
<polygon points="136.87,561.42 137.60,562.54 128.97,457.65 128.19,456.32" fill="#baa021" />
<polygon points="137.60,562.54 138.35,563.66 129.79,458.97 128.97,457.65" fill="#b99f21" />
<polygon points="138.35,563.66 139.13,564.77 130.63,460.26 129.79,458.97" fill="#b89f20" />
<polygon points="139.13,564.77 139.94,565.86 131.50,461.53 130.63,460.26" fill="#b79e20" />
<polygon points="139.94,565.86 140.78,566.95 132.39,462.78 131.50,461.53" fill="#b69d20" />
<polygon points="140.78,566.95 141.65,568.02 133.32,464.00 132.39,462.78" fill="#b59c20" />
<polygon points="141.65,568.02 142.54,569.08 134.27,465.20 133.32,464.00" fill="#b39b20" />
<polygon points="142.54,569.08 143.46,570.13 135.25,466.38 134.27,465.20" fill="#b29a20" />
<polygon points="143.46,570.13 144.40,571.17 136.26,467.53 135.25,466.38" fill="#b1991f" />
<polygon points="144.40,571.17 145.37,572.20 137.29,468.66 136.26,467.53" fill="#b0981f" />
<polygon points="145.37,572.20 146.37,573.22 138.35,469.76 137.29,468.66" fill="#af971f" />
<polygon points="146.37,573.22 147.39,574.22 139.43,470.84 138.35,469.76" fill="#ad961f" />
<polygon points="147.39,574.22 148.43,575.21 140.55,471.89 139.43,470.84" fill="#ac941e" />
<polygon points="148.43,575.21 149.51,576.18 141.68,472.92 140.55,471.89" fill="#ab931e" />
<polygon points="149.51,576.18 150.60,577.14 142.84,473.91 141.68,472.92" fill="#a9921e" />
<polygon points="150.60,577.14 151.72,578.09 144.03,474.88 142.84,473.91" fill="#a8911e" />
<polygon points="151.72,578.09 152.87,579.02 145.24,475.83 144.03,474.88" fill="#a68f1d" />
<polygon points="152.87,579.02 154.03,579.94 146.48,476.74 145.24,475.83" fill="#a58e1d" />
<polygon points="154.03,579.94 155.22,580.84 147.74,477.63 146.48,476.74" fill="#a38d1d" />
<polygon points="155.22,580.84 156.44,581.72 149.02,478.49 147.74,477.63" fill="#a18b1d" />
<polygon points="156.44,581.72 157.68,582.59 150.33,479.32 149.02,478.49" fill="#a08a1c" />
<polygon points="157.68,582.59 158.93,583.45 151.66,480.12 150.33,479.32" fill="#9e891c" />
<polygon points="158.93,583.45 160.21,584.28 153.01,480.89 151.66,480.12" fill="#9c871c" />
<polygon points="160.21,584.28 161.52,585.10 154.38,481.63 153.01,480.89" fill="#9b861b" />
<polygon points="161.52,585.10 162.84,585.90 155.78,482.34 154.38,481.63" fill="#99841b" />
<polygon points="162.84,585.90 164.18,586.69 157.20,483.02 155.78,482.34" fill="#97821b" />
<polygon points="164.18,586.69 165.54,587.46 158.63,483.67 157.20,483.02" fill="#95811a" />
<polygon points="165.54,587.46 166.93,588.20 160.09,484.29 158.63,483.67" fill="#937f1a" />
<polygon points="166.93,588.20 168.33,588.93 161.57,484.88 160.09,484.29" fill="#927e1a" />
<polygon points="168.33,588.93 169.75,589.64 163.07,485.44 161.57,484.88" fill="#907c19" />
<polygon points="169.75,589.64 171.19,590.34 164.58,485.96 163.07,485.44" fill="#8e7a19" />
<polygon points="171.19,590.34 172.65,591.01 166.12,486.46 164.58,485.96" fill="#8c7919" />
<polygon points="172.65,591.01 174.12,591.66 167.67,486.92 166.12,486.46" fill="#8a7718" />
<polygon points="174.12,591.66 175.61,592.30 169.24,487.35 167.67,486.92" fill="#887518" />
<polygon points="175.61,592.30 177.12,592.91 170.83,487.74 169.24,487.35" fill="#867318" />
<polygon points="177.12,592.91 178.64,593.50 172.43,488.11 170.83,487.74" fill="#837217" />
<polygon points="178.64,593.50 180.18,594.08 174.05,488.44 172.43,488.11" fill="#817017" />
<polygon points="180.18,594.08 181.73,594.63 175.69,488.74 174.05,488.44" fill="#7f6e16" />
<polygon points="181.73,594.63 183.30,595.16 177.34,489.00 175.69,488.74" fill="#7d6c16" />
<polygon points="183.30,595.16 184.88,595.67 179.01,489.23 177.34,489.00" fill="#7b6a16" />
<polygon points="184.88,595.67 186.48,596.16 180.69,489.43 179.01,489.23" fill="#796815" />
<polygon points="186.48,596.16 188.09,596.62 182.38,489.60 180.69,489.43" fill="#766615" />
<polygon points="188.09,596.62 189.71,597.07 184.09,489.73 182.38,489.60" fill="#746415" />
<polygon points="189.71,597.07 191.34,597.49 185.81,489.83 184.09,489.73" fill="#726214" />
<polygon points="191.34,597.49 192.98,597.89 187.54,489.89 185.81,489.83" fill="#706014" />
<polygon points="192.98,597.89 194.63,598.27 189.28,489.92 187.54,489.89" fill="#6d5e13" />
<polygon points="194.63,598.27 196.30,598.63 191.04,489.92 189.28,489.92" fill="#6b5c13" />
<polygon points="196.30,598.63 197.97,598.96 192.80,489.88 191.04,489.92" fill="#695a13" />
<polygon points="197.97,598.96 199.65,599.28 194.57,489.81 192.80,489.88" fill="#665812" />
<polygon points="199.65,599.28 201.34,599.56 196.36,489.71 194.57,489.81" fill="#645612" />
<polygon points="201.34,599.56 203.04,599.83 198.15,489.57 196.36,489.71" fill="#625411" />
<polygon points="203.04,599.83 204.74,600.07 199.95,489.39 198.15,489.57" fill="#5f5211" />
<polygon points="204.74,600.07 206.45,600.29 201.75,489.19 199.95,489.39" fill="#5d5010" />
<polygon points="206.45,600.29 208.17,600.49 203.57,488.94 201.75,489.19" fill="#5a4e10" />
<polygon points="208.17,600.49 209.89,600.66 205.39,488.67 203.57,488.94" fill="#584c10" />
<polygon points="209.89,600.66 211.61,600.81 207.21,488.36 205.39,488.67" fill="#564a0f" />
<polygon points="211.61,600.81 213.34,600.94 209.04,488.02 207.21,488.36" fill="#53480f" />
<polygon points="213.34,600.94 215.08,601.05 210.88,487.64 209.04,488.02" fill="#51460e" />
<polygon points="215.08,601.05 216.82,601.13 212.72,487.23 210.88,487.64" fill="#4e430e" />
<polygon points="216.82,601.13 218.55,601.18 214.56,486.79 212.72,487.23" fill="#4c410d" />
<polygon points="218.55,601.18 220.29,601.22 216.40,486.31 214.56,486.79" fill="#493f0d" />
<polygon points="220.29,601.22 222.04,601.23 218.25,485.80 216.40,486.31" fill="#473d0c" />
<polygon points="222.04,601.23 223.78,601.21 220.10,485.26 218.25,485.80" fill="#443b0c" />
<polygon points="223.78,601.21 225.52,601.18 221.94,484.68 220.10,485.26" fill="#42390c" />
<polygon points="225.52,601.18 227.26,601.11 223.79,484.07 221.94,484.68" fill="#3f360b" />
<polygon points="227.26,601.11 229.00,601.03 225.64,483.43 223.79,484.07" fill="#3d340b" />
<polygon points="229.00,601.03 230.74,600.92 227.49,482.76 225.64,483.43" fill="#3a320a" />
<polygon points="230.74,600.92 232.47,600.79 229.33,482.05 227.49,482.76" fill="#37300a" />
<polygon points="232.47,600.79 234.20,600.64 231.17,481.32 229.33,482.05" fill="#352e09" />
<polygon points="234.20,600.64 235.93,600.46 233.01,480.55 231.17,481.32" fill="#322c09" />
<polygon points="235.93,600.46 237.66,600.26 234.85,479.75 233.01,480.55" fill="#342d09" />
<polygon points="237.66,600.26 239.37,600.04 236.68,478.91 234.85,479.75" fill="#362f0a" />
<polygon points="239.37,600.04 241.09,599.79 238.50,478.05 236.68,478.91" fill="#39310a" />
<polygon points="241.09,599.79 242.79,599.52 240.33,477.16 238.50,478.05" fill="#3b330a" />
<polygon points="242.79,599.52 244.49,599.23 242.14,476.23 240.33,477.16" fill="#3e350b" />
<polygon points="244.49,599.23 246.19,598.91 243.95,475.28 242.14,476.23" fill="#40380b" />
<polygon points="246.19,598.91 247.87,598.57 245.75,474.29 243.95,475.28" fill="#433a0c" />
<polygon points="247.87,598.57 249.55,598.21 247.54,473.28 245.75,474.29" fill="#453c0c" />
<polygon points="249.55,598.21 251.21,597.83 249.32,472.23 247.54,473.28" fill="#483e0d" />
<polygon points="251.21,597.83 252.87,597.43 251.10,471.16 249.32,472.23" fill="#4a400d" />
<polygon points="252.87,597.43 254.52,597.00 252.86,470.06 251.10,471.16" fill="#4d420e" />
<polygon points="254.52,597.00 256.15,596.55 254.62,468.93 252.86,470.06" fill="#4f450e" />
<polygon points="256.15,596.55 257.78,596.08 256.36,467.78 254.62,468.93" fill="#52470e" />
<polygon points="257.78,596.08 259.39,595.59 258.09,466.59 256.36,467.78" fill="#54490f" />
<polygon points="259.39,595.59 260.99,595.08 259.81,465.38 258.09,466.59" fill="#574b0f" />
<polygon points="260.99,595.08 262.58,594.54 261.52,464.14 259.81,465.38" fill="#594d10" />
<polygon points="262.58,594.54 264.15,593.99 263.21,462.88 261.52,464.14" fill="#5c4f10" />
<polygon points="264.15,593.99 265.71,593.41 264.89,461.59 263.21,462.88" fill="#5e5111" />
<polygon points="265.71,593.41 267.25,592.81 266.55,460.28 264.89,461.59" fill="#615311" />
<polygon points="267.25,592.81 268.78,592.20 268.20,458.94 266.55,460.28" fill="#635511" />
<polygon points="268.78,592.20 270.30,591.56 269.83,457.57 268.20,458.94" fill="#655712" />
<polygon points="270.30,591.56 271.79,590.90 271.45,456.19 269.83,457.57" fill="#685912" />
<polygon points="271.79,590.90 273.27,590.23 273.05,454.78 271.45,456.19" fill="#6a5c13" />
<polygon points="273.27,590.23 274.74,589.53 274.63,453.34 273.05,454.78" fill="#6c5e13" />
<polygon points="274.74,589.53 276.18,588.82 276.20,451.89 274.63,453.34" fill="#6f6014" />
<polygon points="276.18,588.82 277.61,588.09 277.75,450.41 276.20,451.89" fill="#716214" />
<polygon points="277.61,588.09 279.02,587.34 279.27,448.91 277.75,450.41" fill="#736314" />
<polygon points="279.02,587.34 280.41,586.57 280.78,447.39 279.27,448.91" fill="#756515" />
<polygon points="280.41,586.57 281.78,585.78 282.27,445.85 280.78,447.39" fill="#786715" />
<polygon points="281.78,585.78 283.14,584.97 283.74,444.29 282.27,445.85" fill="#7a6916" />
<polygon points="283.14,584.97 284.47,584.15 285.19,442.71 283.74,444.29" fill="#7c6b16" />
<polygon points="284.47,584.15 285.78,583.31 286.61,441.11 285.19,442.71" fill="#7e6d16" />
<polygon points="285.78,583.31 287.07,582.46 288.02,439.49 286.61,441.11" fill="#806f17" />
<polygon points="287.07,582.46 288.33,581.59 289.40,437.86 288.02,439.49" fill="#837117" />
<polygon points="288.33,581.59 289.58,580.70 290.76,436.20 289.40,437.86" fill="#857317" />
<polygon points="289.58,580.70 290.80,579.79 292.09,434.53 290.76,436.20" fill="#877418" />
<polygon points="290.80,579.79 292.00,578.87 293.41,432.85 292.09,434.53" fill="#897618" />
<polygon points="292.00,578.87 293.18,577.94 294.69,431.15 293.41,432.85" fill="#8b7819" />
<polygon points="357.74,525.81 366.71,337.23 362.82,339.99 294.69,431.15 293.18,577.94" fill="#8c7919" />
<polygon points="213.48,251.83 148.25,335.78 148.25,335.78 147.04,337.35 145.85,338.94 144.68,340.55 143.53,342.17 142.40,343.80 141.30,345.44 140.22,347.09 139.16,348.76 138.12,350.43 137.11,352.12 136.12,353.82 135.15,355.52 134.21,357.24 133.30,358.96 132.40,360.69 131.54,362.43 130.69,364.17 129.88,365.92 129.08,367.68 128.32,369.45 127.58,371.21 126.87,372.99 126.18,374.76 125.52,376.54 124.89,378.33 124.29,380.11 123.71,381.90 123.16,383.69 122.64,385.49 122.14,387.28 121.68,389.07 121.24,390.86 120.83,392.65 120.46,394.44 120.11,396.23 119.78,398.01 119.49,399.80 119.23,401.57 119.00,403.35 118.79,405.12 118.62,406.88 118.48,408.64 118.36,410.40 118.28,412.14 118.23,413.88 118.20,415.62 118.21,417.34 118.24,419.06 118.31,420.76 118.41,422.46 118.54,424.15 118.70,425.82 118.88,427.49 119.10,429.14 119.35,430.78 119.63,432.41 119.94,434.02 120.28,435.62 120.65,437.21 121.05,438.78 121.48,440.34 121.95,441.88 122.44,443.41 122.96,444.91 123.51,446.40 124.09,447.88 124.70,449.33 125.34,450.77 126.01,452.19 126.71,453.58 127.43,454.96 128.19,456.32 128.97,457.65 129.79,458.97 130.63,460.26 131.50,461.53 132.39,462.78 133.32,464.00 134.27,465.20 135.25,466.38 136.26,467.53 137.29,468.66 138.35,469.76 139.43,470.84 140.55,471.89 141.68,472.92 142.84,473.91 144.03,474.88 145.24,475.83 146.48,476.74 147.74,477.63 149.02,478.49 150.33,479.32 151.66,480.12 153.01,480.89 154.38,481.63 155.78,482.34 157.20,483.02 158.63,483.67 160.09,484.29 161.57,484.88 163.07,485.44 164.58,485.96 166.12,486.46 167.67,486.92 169.24,487.35 170.83,487.74 172.43,488.11 174.05,488.44 175.69,488.74 177.34,489.00 179.01,489.23 180.69,489.43 182.38,489.60 184.09,489.73 185.81,489.83 187.54,489.89 189.28,489.92 191.04,489.92 192.80,489.88 194.57,489.81 196.36,489.71 198.15,489.57 199.95,489.39 201.75,489.19 203.57,488.94 205.39,488.67 207.21,488.36 209.04,488.02 210.88,487.64 212.72,487.23 214.56,486.79 216.40,486.31 218.25,485.80 220.10,485.26 221.94,484.68 223.79,484.07 225.64,483.43 227.49,482.76 229.33,482.05 231.17,481.32 233.01,480.55 234.85,479.75 236.68,478.91 238.50,478.05 240.33,477.16 242.14,476.23 243.95,475.28 245.75,474.29 247.54,473.28 249.32,472.23 251.10,471.16 252.86,470.06 254.62,468.93 256.36,467.78 258.09,466.59 259.81,465.38 261.52,464.14 263.21,462.88 264.89,461.59 266.55,460.28 268.20,458.94 269.83,457.57 271.45,456.19 273.05,454.78 274.63,453.34 276.20,451.89 277.75,450.41 279.27,448.91 280.78,447.39 282.27,445.85 283.74,444.29 285.19,442.71 286.61,441.11 288.02,439.49 289.40,437.86 290.76,436.20 292.09,434.53 293.41,432.85 294.69,431.15 294.69,431.15 362.82,339.99 358.37,337.36 290.33,428.31 290.33,428.31 289.11,429.91 287.88,431.49 286.62,433.06 285.34,434.62 284.03,436.16 282.71,437.68 281.37,439.18 280.00,440.67 278.62,442.14 277.22,443.59 275.80,445.02 274.36,446.43 272.90,447.82 271.43,449.20 269.94,450.54 268.43,451.87 266.91,453.18 265.37,454.46 263.81,455.72 262.25,456.96 260.67,458.17 259.07,459.36 257.46,460.53 255.85,461.67 254.21,462.78 252.57,463.87 250.92,464.94 249.26,465.97 247.59,466.98 245.91,467.97 244.22,468.92 242.53,469.85 240.82,470.75 239.11,471.62 237.40,472.46 235.68,473.28 233.96,474.06 232.23,474.82 230.49,475.54 228.76,476.24 227.02,476.90 225.28,477.54 223.54,478.14 221.80,478.72 220.06,479.26 218.32,479.77 216.58,480.25 214.84,480.71 213.11,481.12 211.37,481.51 209.65,481.87 207.92,482.19 206.20,482.48 204.49,482.74 202.78,482.97 201.07,483.17 199.38,483.34 197.69,483.47 196.01,483.57 194.33,483.64 192.67,483.68 191.02,483.68 189.37,483.65 187.74,483.60 186.12,483.51 184.51,483.38 182.91,483.23 181.33,483.05 179.75,482.83 178.20,482.58 176.65,482.30 175.12,481.99 173.61,481.65 172.11,481.28 170.63,480.88 169.16,480.45 167.71,479.98 166.28,479.49 164.87,478.97 163.47,478.42 162.09,477.84 160.74,477.23 159.40,476.59 158.08,475.92 156.78,475.22 155.50,474.50 154.25,473.75 153.01,472.97 151.80,472.16 150.61,471.33 149.44,470.47 148.29,469.58 147.17,468.67 146.07,467.73 145.00,466.77 143.94,465.78 142.92,464.76 141.91,463.73 140.94,462.67 139.98,461.58 139.06,460.47 138.15,459.34 137.28,458.19 136.43,457.01 135.60,455.82 134.81,454.60 134.03,453.36 133.29,452.10 132.57,450.83 131.88,449.53 131.22,448.21 130.59,446.88 129.98,445.52 129.40,444.15 128.85,442.76 128.32,441.36 127.83,439.93 127.36,438.50 126.92,437.04 126.51,435.58 126.13,434.09 125.77,432.60 125.45,431.09 125.15,429.56 124.88,428.03 124.65,426.48 124.43,424.92 124.25,423.35 124.10,421.77 123.98,420.18 123.88,418.58 123.81,416.96 123.77,415.34 123.76,413.72 123.78,412.08 123.83,410.44 123.91,408.79 124.01,407.13 124.14,405.47 124.30,403.80 124.49,402.13 124.71,400.46 124.95,398.78 125.22,397.09 125.52,395.41 125.85,393.72 126.21,392.03 126.59,390.34 127.00,388.64 127.44,386.95 127.90,385.26 128.39,383.56 128.91,381.87 129.45,380.18 130.02,378.49 130.61,376.81 131.23,375.12 131.88,373.44 132.55,371.77 133.25,370.10 133.97,368.43 134.71,366.77 135.48,365.11 136.28,363.46 137.10,361.82 137.94,360.18 138.80,358.55 139.69,356.93 140.60,355.32 141.54,353.71 142.49,352.12 143.47,350.54 144.47,348.96 145.49,347.40 146.54,345.84 147.60,344.30 148.68,342.77 149.79,341.25 150.91,339.75 152.06,338.26 152.06,338.26 217.37,254.13" fill="#b2e65c" />
<g stroke="#000" stroke-width="1" fill="none" clip-path="url(#zc)">
<line x1="223.36" y1="527.68" x2="162.51" y2="-1458.89" />
<line x1="223.36" y1="527.68" x2="207.45" y2="539.67" />
<line x1="222.65" y1="504.42" x2="206.51" y2="516.39" />
<line x1="221.92" y1="480.53" x2="205.55" y2="492.46" />
<line x1="221.17" y1="455.96" x2="204.57" y2="467.87" />
<line x1="220.39" y1="430.71" x2="203.55" y2="442.57" />
<line x1="219.60" y1="404.74" x2="202.50" y2="416.54" />
<line x1="218.78" y1="378.01" x2="201.43" y2="389.75" />
<line x1="217.93" y1="350.49" x2="200.32" y2="362.17" />
<line x1="217.07" y1="322.15" x2="199.18" y2="333.75" />
<line x1="216.17" y1="292.95" x2="198.00" y2="304.46" />
<line x1="215.25" y1="262.84" x2="177.98" y2="285.88" />
<line x1="214.30" y1="231.80" x2="195.54" y2="243.10" />
<line x1="213.32" y1="199.77" x2="194.24" y2="210.95" />
<line x1="212.30" y1="166.70" x2="192.91" y2="177.74" />
<line x1="211.26" y1="132.55" x2="191.53" y2="143.44" />
<line x1="210.18" y1="97.26" x2="190.11" y2="107.97" />
<line x1="209.06" y1="60.77" x2="188.63" y2="71.29" />
<line x1="207.90" y1="23.01" x2="187.11" y2="33.33" />
<line x1="206.71" y1="-16.07" x2="185.53" y2="-5.98" />
<line x1="205.47" y1="-56.55" x2="183.89" y2="-46.71" />
<line x1="204.18" y1="-98.50" x2="159.72" y2="-79.17" />
<line x1="202.85" y1="-142.01" x2="180.44" y2="-132.76" />
<line x1="201.46" y1="-187.17" x2="178.61" y2="-178.25" />
<line x1="200.03" y1="-234.07" x2="176.71" y2="-225.52" />
<line x1="198.53" y1="-282.81" x2="174.73" y2="-274.66" />
<line x1="196.98" y1="-333.50" x2="172.68" y2="-325.81" />
<line x1="195.36" y1="-386.27" x2="170.54" y2="-379.07" />
<line x1="193.68" y1="-441.25" x2="168.31" y2="-434.58" />
<line x1="191.93" y1="-498.57" x2="165.98" y2="-492.49" />
<line x1="190.09" y1="-558.38" x2="163.55" y2="-552.96" />
<line x1="188.18" y1="-620.87" x2="133.11" y2="-611.32" />
<line x1="186.18" y1="-686.20" x2="158.36" y2="-682.28" />
<line x1="184.08" y1="-754.58" x2="155.58" y2="-751.52" />
<line x1="181.89" y1="-826.22" x2="152.66" y2="-824.12" />
<line x1="179.59" y1="-901.37" x2="149.60" y2="-900.33" />
<line x1="177.17" y1="-980.28" x2="146.38" y2="-980.41" />
<line x1="174.63" y1="-1063.26" x2="143.00" y2="-1064.68" />
<line x1="171.95" y1="-1150.62" x2="139.43" y2="-1153.47" />
<line x1="169.13" y1="-1242.71" x2="135.67" y2="-1247.15" />
<line x1="166.15" y1="-1339.94" x2="131.69" y2="-1346.14" />
<line x1="237.95" y1="253.95" x2="237.76" y2="243.77" />
<line x1="237.76" y1="243.77" x2="219.67" y2="254.90" />
<line x1="219.67" y1="254.90" x2="219.96" y2="265.12" />
<line x1="219.96" y1="265.12" x2="237.95" y2="253.95" />
<line x1="237.66" y1="238.63" x2="237.46" y2="228.29" />
<line x1="237.46" y1="228.29" x2="219.23" y2="239.38" />
<line x1="219.23" y1="239.38" x2="219.52" y2="249.75" />
<line x1="219.52" y1="249.75" x2="237.66" y2="238.63" />
<line x1="237.37" y1="223.08" x2="219.08" y2="234.15" />
<line x1="231.14" y1="-103.10" x2="230.87" y2="-117.27" />
<line x1="230.87" y1="-117.27" x2="209.40" y2="-108.01" />
<line x1="209.40" y1="-108.01" x2="209.80" y2="-93.74" />
<line x1="209.80" y1="-93.74" x2="231.14" y2="-103.10" />
<line x1="230.73" y1="-124.42" x2="230.45" y2="-138.85" />
<line x1="230.45" y1="-138.85" x2="208.79" y2="-129.75" />
<line x1="208.79" y1="-129.75" x2="209.20" y2="-115.21" />
<line x1="209.20" y1="-115.21" x2="230.73" y2="-124.42" />
<line x1="230.31" y1="-146.14" x2="230.03" y2="-160.83" />
<line x1="230.03" y1="-160.83" x2="221.89" y2="-157.50" />
<line x1="221.89" y1="-157.50" x2="222.22" y2="-142.76" />
<line x1="222.22" y1="-142.76" x2="208.58" y2="-137.08" />
<line x1="208.58" y1="-137.08" x2="208.16" y2="-151.89" />
<line x1="221.34" y1="-616.09" x2="220.94" y2="-637.15" />
<line x1="220.94" y1="-637.15" x2="194.55" y2="-632.72" />
<line x1="194.55" y1="-632.72" x2="195.16" y2="-611.41" />
<line x1="195.16" y1="-611.41" x2="221.34" y2="-616.09" />
<line x1="220.73" y1="-647.80" x2="220.32" y2="-669.34" />
<line x1="220.32" y1="-669.34" x2="193.63" y2="-665.29" />
<line x1="193.63" y1="-665.29" x2="194.25" y2="-643.49" />
<line x1="194.25" y1="-643.49" x2="220.73" y2="-647.80" />
<line x1="220.11" y1="-680.23" x2="219.69" y2="-702.26" />
<line x1="219.69" y1="-702.26" x2="192.69" y2="-698.60" />
<line x1="192.69" y1="-698.60" x2="193.32" y2="-676.31" />
<line x1="210.15" y1="-678.77" x2="209.65" y2="-700.90" />
<line x1="206.07" y1="-1415.73" x2="205.41" y2="-1450.28" />
<line x1="205.41" y1="-1450.28" x2="171.19" y2="-1458.44" />
<line x1="171.19" y1="-1458.44" x2="172.19" y2="-1423.22" />
<line x1="172.19" y1="-1423.22" x2="206.07" y2="-1415.73" />
<line x1="205.07" y1="-1467.81" x2="204.39" y2="-1503.36" />
<line x1="204.39" y1="-1503.36" x2="169.66" y2="-1512.55" />
<line x1="169.66" y1="-1512.55" x2="170.69" y2="-1476.30" />
<line x1="170.69" y1="-1476.30" x2="205.07" y2="-1467.81" />
<line x1="204.05" y1="-1521.39" x2="191.10" y2="-1524.93" />
<line x1="191.10" y1="-1524.93" x2="190.27" y2="-1561.79" />
<line x1="203.35" y1="-1557.97" x2="168.09" y2="-1568.26" />
</g>
<line x1="55.20" y1="564.30" x2="79.22" y2="548.36" stroke="#f00" stroke-width="1"/>
<line x1="55.20" y1="564.30" x2="29.97" y2="549.12" stroke="#0f0" stroke-width="1"/>
<line x1="55.20" y1="564.30" x2="55.20" y2="537.31" stroke="#00f" stroke-width="1"/>
<line x1="80.5" y1="548.5" x2="86.5" y2="542.5" stroke="#000" stroke-width="1"/>
<line x1="80.5" y1="542.5" x2="86.5" y2="548.5" stroke="#000" stroke-width="1"/>
<line x1="21.5" y1="549.5" x2="27.5" y2="543.5" stroke="#000" stroke-width="1"/>
<line x1="21.5" y1="543.5" x2="24.5" y2="546.5" stroke="#000" stroke-width="1"/>
<line x1="51.5" y1="535.5" x2="57.5" y2="535.5" stroke="#000" stroke-width="1"/>
<line x1="51.5" y1="529.5" x2="57.5" y2="529.5" stroke="#000" stroke-width="1"/>
<line x1="51.5" y1="535.5" x2="57.5" y2="529.5" stroke="#000" stroke-width="1"/>
</svg>
<div class="abs" style="left:-1px;top:50px;width:1042px;height:1px;background:#f0f0f0"></div>
<div class="abs" style="left:556px;top:52px;width:484px;height:19px;background:#d9d9d9;border:1px solid #b9b9b9;box-sizing:border-box"></div>
<svg class="abs" style="left:1023px;top:57px" width="10" height="9" viewBox="0 0 10 9"><path d="M1.2 0.8 L8.2 7.8 M8.2 0.8 L1.2 7.8" stroke="#1a1a1a" stroke-width="1.9" fill="none"/></svg>
<div class="abs" style="left:556px;top:82px;width:13px;height:13px;background:#005fb8;border-radius:3px"><svg width="13" height="13" viewBox="0 0 13 13" style="position:absolute;left:0;top:0"><path d="M3.5 6.9 L5.6 8.9 L9.6 4.9" stroke="#fff" stroke-width="1" fill="none"/></svg></div>
<div class="abs" style="left:717px;top:78px;width:158px;height:20px;background:#eaf3fc;border:1px solid #3b87d3;border-radius:2.5px;box-sizing:border-box"></div>
<svg class="abs" style="left:861px;top:86px" width="10" height="6" viewBox="0 0 10 6"><path d="M1 0.8 L4.8 4.6 L8.6 0.8" stroke="#555" stroke-width="1" fill="none"/></svg>
<div class="btn" style="left:880px;top:78px;width:155px;height:21px;"></div>
<div class="abs" style="left:557px;top:105px;width:191px;height:25px;background:#fff;border-radius:2px;border-bottom:1px solid #8a8a8a;box-sizing:border-box"></div>
<svg class="abs" style="left:735px;top:116px" width="10" height="6" viewBox="0 0 10 6"><path d="M1 0.8 L4.8 4.6 L8.6 0.8" stroke="#666" stroke-width="1" fill="none"/></svg>
<div class="btn" style="left:763px;top:105px;width:38px;height:24px;"></div>
<div class="btn" style="left:807px;top:105px;width:38px;height:24px;"></div>
<div class="btn" style="left:851px;top:105px;width:184px;height:24px;"></div>
<div class="abs" style="left:556px;top:134px;width:480px;height:578px;border:1px solid #828790;box-sizing:border-box;background:#f0f0f0"></div>
<div class="abs" style="left:557px;top:135px;width:478px;height:21px;background:#cce8ff;border:1px solid #99d1ff;border-radius:3px;box-sizing:border-box"></div>
<svg class="abs" style="left:562px;top:143px" width="14" height="8" viewBox="0 0 14 8"><path d="M0 0 H13.2 L6.6 7 Z" fill="#000"/></svg>
<div class="abs" style="left:985px;top:158px;width:45px;height:16px;background:linear-gradient(90deg,#fff 0 29px,#f0f0f0 29px);border-bottom:1px solid #8a8a8a"></div>
<div class="abs" style="left:1015px;top:159px;width:14px;height:14px;border:1px solid #b4b4b4;border-top:none;box-sizing:border-box"><svg width="12" height="14" viewBox="0 0 12 14" style="position:absolute;left:0;top:0" shape-rendering="crispEdges"><path d="M0 7.5 H12" stroke="#b4b4b4" stroke-width="1"/><path d="M3 5 H8 V4 H7 V3 H6 V2 H5 V3 H4 V4 H3 Z M3 9 H8 V10 H7 V11 H6 V12 H5 V11 H4 V10 H3 Z" fill="#000"/></svg></div>
<div class="abs" style="left:985px;top:176px;width:45px;height:16px;background:linear-gradient(90deg,#fff 0 29px,#f0f0f0 29px);border-bottom:1px solid #8a8a8a"></div>
<div class="abs" style="left:1015px;top:177px;width:14px;height:14px;border:1px solid #b4b4b4;border-top:none;box-sizing:border-box"><svg width="12" height="14" viewBox="0 0 12 14" style="position:absolute;left:0;top:0" shape-rendering="crispEdges"><path d="M0 7.5 H12" stroke="#b4b4b4" stroke-width="1"/><path d="M3 5 H8 V4 H7 V3 H6 V2 H5 V3 H4 V4 H3 Z M3 9 H8 V10 H7 V11 H6 V12 H5 V11 H4 V10 H3 Z" fill="#000"/></svg></div>
<div class="abs" style="left:975px;top:194px;width:55px;height:16px;background:linear-gradient(90deg,#fff 0 39px,#f0f0f0 39px);border-bottom:1px solid #8a8a8a"></div>
<div class="abs" style="left:1015px;top:195px;width:14px;height:14px;border:1px solid #b4b4b4;border-top:none;box-sizing:border-box"><svg width="12" height="14" viewBox="0 0 12 14" style="position:absolute;left:0;top:0" shape-rendering="crispEdges"><path d="M0 7.5 H12" stroke="#b4b4b4" stroke-width="1"/><path d="M3 5 H8 V4 H7 V3 H6 V2 H5 V3 H4 V4 H3 Z M3 9 H8 V10 H7 V11 H6 V12 H5 V11 H4 V10 H3 Z" fill="#000"/></svg></div>
<div class="abs" style="left:985px;top:212px;width:45px;height:16px;background:linear-gradient(90deg,#fff 0 29px,#f0f0f0 29px);border-bottom:1px solid #8a8a8a"></div>
<div class="abs" style="left:1015px;top:213px;width:14px;height:14px;border:1px solid #b4b4b4;border-top:none;box-sizing:border-box"><svg width="12" height="14" viewBox="0 0 12 14" style="position:absolute;left:0;top:0" shape-rendering="crispEdges"><path d="M0 7.5 H12" stroke="#b4b4b4" stroke-width="1"/><path d="M3 5 H8 V4 H7 V3 H6 V2 H5 V3 H4 V4 H3 Z M3 9 H8 V10 H7 V11 H6 V12 H5 V11 H4 V10 H3 Z" fill="#000"/></svg></div>
<div class="abs" style="left:985px;top:230px;width:45px;height:16px;background:linear-gradient(90deg,#fff 0 29px,#f0f0f0 29px);border-bottom:1px solid #8a8a8a"></div>
<div class="abs" style="left:1015px;top:231px;width:14px;height:14px;border:1px solid #b4b4b4;border-top:none;box-sizing:border-box"><svg width="12" height="14" viewBox="0 0 12 14" style="position:absolute;left:0;top:0" shape-rendering="crispEdges"><path d="M0 7.5 H12" stroke="#b4b4b4" stroke-width="1"/><path d="M3 5 H8 V4 H7 V3 H6 V2 H5 V3 H4 V4 H3 Z M3 9 H8 V10 H7 V11 H6 V12 H5 V11 H4 V10 H3 Z" fill="#000"/></svg></div>
<div class="abs" style="left:1035px;top:722px;width:2px;height:2px;background:#bababa"></div><div class="abs" style="left:1032px;top:725px;width:2px;height:2px;background:#bababa"></div><div class="abs" style="left:1035px;top:725px;width:2px;height:2px;background:#bababa"></div><div class="abs" style="left:1029px;top:728px;width:2px;height:2px;background:#bababa"></div><div class="abs" style="left:1032px;top:728px;width:2px;height:2px;background:#bababa"></div><div class="abs" style="left:1035px;top:728px;width:2px;height:2px;background:#bababa"></div>
<div class="sep" style="left:97px"></div>
<div class="sep" style="left:227px"></div>
<div class="sep" style="left:419px"></div>
<div class="sep" style="left:487px"></div>
<div class="tb on" style="left:423px"></div>
<div class="tb on" style="left:491px"></div>
<svg class="abs" style="left:-1px;top:679px;will-change:transform" width="556" height="34" viewBox="0 680 556 34"><path d="M17.90 685.70 L26.70 690.50 L26.70 699.60 L17.90 704.40 L9.10 699.60 L9.10 690.50 Z M17.90 695.30 L9.10 690.50 M17.90 695.30 L26.70 690.50 M17.90 695.30 L17.90 704.40" fill="none" stroke="#1a1a1a" stroke-width="1.1" stroke-dasharray="2 1.7" stroke-linejoin="round"/>
<path d="M10.5 700.6 H24.5 V709.5 H10.5 Z" fill="#f0f0f0"/>
<path d="M12.9 699.9 L17.3 704.1 L12.9 708.3 M18.6 699.9 L23 704.1 L18.6 708.3" fill="none" stroke="#000" stroke-width="3" stroke-linejoin="miter"/>
<path d="M48.50 685.40 L57.30 690.50 L57.30 701.10 L48.50 706.20 L39.70 701.10 L39.70 690.50 Z M48.50 695.60 L39.70 690.50 M48.50 695.60 L57.30 690.50 M48.50 695.60 L48.50 706.20" fill="none" stroke="#1a1a1a" stroke-width="1.3" stroke-linejoin="round"/>
<path d="M46.3 700.8 H51.3 V707.2 H46.3 Z" fill="#f0f0f0"/>
<path d="M45.6 700 H52.1 M45.6 708 H52.1" stroke="#000" stroke-width="1.6"/><path d="M46.3 700.6 H51.5 L48.9 704 Z" fill="#111"/><path d="M46.5 707.4 H51.3 L48.9 704 Z" fill="#8a8a8a" stroke="#333" stroke-width="0.5"/>
<path d="M74.6 696.6 V690.6 L78.6 686.6 H85.5 V696.6" fill="none" stroke="#1a1a1a" stroke-width="1.2"/><path d="M74.6 690.8 H78.8 V686.6 Z" fill="#1a1a1a"/>
<text x="70.4" y="706.2" font-family="Liberation Sans, DejaVu Sans, sans-serif" font-weight="bold" font-size="9.9px" textLength="20.3" lengthAdjust="spacingAndGlyphs" fill="#000" stroke="#000" stroke-width="0.5">STL</text>
<circle cx="115.2" cy="694.2" r="4.3" fill="none" stroke="#1a1a1a" stroke-width="2.3"/>
<path d="M118.6 697.8 L122.4 703" stroke="#1a1a1a" stroke-width="3.1" stroke-linecap="round"/>
<path d="M108.9 691.3 V688 H112.2 M118.8 688 H122.1 V691.3 M108.9 697.3 V700.6 H112.2 M122.1 697.3 V699" fill="none" stroke="#1a1a1a" stroke-width="1.8"/>
<circle cx="146.1" cy="694.5" r="4.4" fill="none" stroke="#1a1a1a" stroke-width="2.3"/>
<path d="M149.6 698.2 L153.8 703.3" stroke="#1a1a1a" stroke-width="3.1" stroke-linecap="round"/>
<path d="M143.5 694.5 H148.7 M146.1 691.9 V697.1" stroke="#1a1a1a" stroke-width="1"/>
<circle cx="177.3" cy="694.5" r="4.4" fill="none" stroke="#1a1a1a" stroke-width="2.3"/>
<path d="M180.8 698.2 L185.0 703.3" stroke="#1a1a1a" stroke-width="3.1" stroke-linecap="round"/>
<path d="M174.7 694.5 H179.9" stroke="#1a1a1a" stroke-width="1"/>
<path d="M204.51 691.12 A7.9 7.9 0 1 1 202.18 697.90" fill="none" stroke="#1a1a1a" stroke-width="2.2"/>
<path d="M201.4 688.6 L207.8 693.4 L201.4 695 Z" fill="#1a1a1a"/>
<path d="M241.50 688.20 L249.30 688.50 L251.30 695.40 L249.00 702.20 L240.90 701.90 L238.40 695.00 Z" fill="none" stroke="#1a1a1a" stroke-width="1.25" stroke-linejoin="round"/>
<path d="M238.40 695.00 L246.60 695.30 M246.60 695.30 L249.30 688.50 M246.60 695.30 L249.00 702.20" fill="none" stroke="#1a1a1a" stroke-width="1.2" stroke-linecap="round"/>
<path d="M251.2 693.4 Q252.6 695 255.9 695.6 Q252.6 696.2 251.2 697.6 Z" fill="#000"/>
<path d="M277.80 690.90 L284.70 693.40 L284.70 701.00 L277.80 704.00 L271.30 701.00 L271.30 693.40 Z" fill="none" stroke="#1a1a1a" stroke-width="1.25" stroke-linejoin="round"/>
<path d="M277.80 696.20 L284.70 693.40 M277.80 696.20 L271.30 693.40" fill="none" stroke="#1a1a1a" stroke-width="1.2" stroke-linecap="round"/>
<path d="M277.80 696.20 L277.80 704.00" fill="none" stroke="#1a1a1a" stroke-width="1.5" stroke-linecap="round"/>
<path d="M275.6 691.2 Q277.3 689.8 277.8 686.6 Q278.3 689.8 280 691.2 Z" fill="#000"/>
<path d="M307.10 687.40 L314.20 690.20 L314.20 698.30 L307.40 700.80 L300.50 698.50 L300.50 690.30 Z" fill="none" stroke="#1a1a1a" stroke-width="1.25" stroke-linejoin="round"/>
<path d="M307.10 695.60 L314.20 698.30 M307.10 695.60 L300.50 698.50" fill="none" stroke="#1a1a1a" stroke-width="1.2" stroke-linecap="round"/>
<path d="M307.10 695.60 L307.10 687.40" fill="none" stroke="#1a1a1a" stroke-width="1.5" stroke-linecap="round"/>
<path d="M305.2 700.4 Q306.9 701.8 307.5 705 Q308.1 701.8 309.8 700.4 Z" fill="#000"/>
<path d="M337.40 688.30 L345.50 688.10 L348.80 695.00 L346.10 701.90 L338.00 702.20 L335.80 695.40 Z" fill="none" stroke="#1a1a1a" stroke-width="1.25" stroke-linejoin="round"/>
<path d="M340.40 695.30 L348.80 695.00 M340.40 695.30 L337.40 688.30 M340.40 695.30 L338.00 702.20" fill="none" stroke="#1a1a1a" stroke-width="1.2" stroke-linecap="round"/>
<path d="M335.9 693.4 Q334.5 695 331.2 695.6 Q334.5 696.2 335.9 697.6 Z" fill="#000"/>
<path d="M370.90 689.80 L378.00 693.00 L378.00 701.00 L370.90 704.00 L364.10 701.00 L364.10 693.00 Z" fill="#fff"/>
<path d="M364.10 693.00 L370.90 696.00 L370.90 704.00 L364.10 701.00 Z" fill="#262626"/>
<path d="M370.90 689.80 L378.00 693.00 L378.00 701.00 L370.90 704.00 L364.10 701.00 L364.10 693.00 Z" fill="none" stroke="#1a1a1a" stroke-width="1.25" stroke-linejoin="round"/>
<path d="M370.90 696.00 L378.00 693.00 M370.90 696.00 L364.10 693.00 M370.90 696.00 L370.90 704.00" fill="none" stroke="#1a1a1a" stroke-width="1.2" stroke-linecap="round"/>
<path d="M402.00 689.80 L409.00 693.00 L409.00 701.00 L402.00 704.00 L395.20 701.00 L395.20 693.00 Z" fill="#fff"/>
<path d="M402.00 689.80 L409.00 693.00 L409.00 699.60 L402.40 696.00 Z" fill="#262626"/>
<path d="M402.00 689.80 L409.00 693.00 L409.00 701.00 L402.00 704.00 L395.20 701.00 L395.20 693.00 Z" fill="none" stroke="#1a1a1a" stroke-width="1.25" stroke-linejoin="round"/>
<path d="M402.00 696.60 L395.20 693.00 M402.00 696.60 L409.00 701.00" fill="none" stroke="#1a1a1a" stroke-width="1.2" stroke-linecap="round"/>
<path d="M402.00 696.60 L402.00 704.00" fill="none" stroke="#1a1a1a" stroke-width="1.6" stroke-linecap="round"/>
<path d="M402.00 696.60 L402.00 689.80" fill="none" stroke="#1a1a1a" stroke-width="1.0" stroke-linecap="round"/>
<path d="M432.6 697 H442.6 V705.2 H432.6 Z M432.6 697 L449.8 689.2 L442.6 697 M449.8 689.2 L442.6 705.2" fill="none" stroke="#000" stroke-width="1.15" stroke-linejoin="round"/>
<path d="M462.8 695 H472.6 V704.6 H462.8 Z M467.6 690.6 H477.4 V700.2 H467.6 Z M462.8 695 L467.6 690.6 M472.6 695 L477.4 690.6 M462.8 704.6 L467.6 700.2 M472.6 704.6 L477.4 700.2" fill="none" stroke="#000" stroke-width="1.2" stroke-linejoin="round"/>
<path d="M507.5 688 V697.7 H518.8 M507.5 697.7 L500.2 704.8" fill="none" stroke="#111" stroke-width="1"/><circle cx="507.5" cy="697.7" r="1.5" fill="#000"/>
<path d="M543.3 693.9 L545.9 696.5 L543.3 699.1 M546.9 693.9 L549.5 696.5 L546.9 699.1" stroke="#555" stroke-width="0.9" fill="none"/></svg>
<span class="t" id="title" style="top:8.84px;font-size:12px;color:#909090;letter-spacing:-0.245px;will-change:transform;left:30.20px;">air_freshener_holder.scad - OpenSCAD</span>
<span class="t" id="m1" style="top:34.84px;font-size:12px;color:#858585;letter-spacing:-0.379px;left:8.50px;">Файл</span>
<span class="t" id="m2" style="top:34.84px;font-size:12px;color:#858585;letter-spacing:-0.241px;left:53.40px;">Правка</span>
<span class="t" id="m3" style="top:34.84px;font-size:12px;color:#858585;letter-spacing:-0.230px;left:109.80px;">Модель</span>
<span class="t" id="m4" style="top:34.84px;font-size:12px;color:#858585;letter-spacing:-0.773px;left:168.60px;">Вид</span>
<span class="t" id="m5" style="top:34.84px;font-size:12px;color:#858585;letter-spacing:0.085px;left:204.80px;">Window</span>
<span class="t" id="m6" style="top:34.84px;font-size:12px;color:#858585;letter-spacing:-0.311px;left:264.70px;">Справка</span>
<span class="t" id="dt" style="top:56.84px;font-size:12px;color:#000;letter-spacing:0.168px;left:561.50px;">Настройщик</span>
<span class="t" id="ap" style="top:83.83px;font-size:11px;color:#000;font-family:'DejaVu Sans Condensed','DejaVu Sans','Liberation Sans',sans-serif;letter-spacing:-0.227px;left:574.00px;">Автопредпросмотр</span>
<span class="t" id="c1" style="top:83.83px;font-size:11px;color:#000;font-family:'DejaVu Sans Condensed','DejaVu Sans','Liberation Sans',sans-serif;letter-spacing:-0.204px;left:720.50px;">Показать описание</span>
<span class="t" id="b1" style="top:83.83px;font-size:11px;color:#000;font-family:'DejaVu Sans Condensed','DejaVu Sans','Liberation Sans',sans-serif;letter-spacing:-0.204px;left:932.80px;">Сбросить</span>
<span class="t" id="c2" style="top:112.83px;font-size:11px;color:#000;font-family:'DejaVu Sans Condensed','DejaVu Sans','Liberation Sans',sans-serif;letter-spacing:-0.214px;left:560.00px;">значения проекта по умолчанию</span>
<span class="t" id="bp" style="top:112.16px;font-size:13px;color:#000;font-family:'DejaVu Sans Condensed','DejaVu Sans','Liberation Sans',sans-serif;left:778.30px;">+</span>
<span class="t" id="bm" style="top:112.33px;font-size:11px;color:#000;font-family:'DejaVu Sans Condensed','DejaVu Sans','Liberation Sans',sans-serif;left:824.00px;">-</span>
<span class="t" id="b2" style="top:111.77px;font-size:14.67px;color:#000;font-family:'DejaVu Sans Condensed','DejaVu Sans','Liberation Sans',sans-serif;letter-spacing:-0.186px;left:854.20px;">сохранить предустановку</span>
<span class="t" id="cf" style="top:142.83px;font-size:11px;color:#000;font-family:'DejaVu Sans Condensed','DejaVu Sans','Liberation Sans',sans-serif;letter-spacing:-0.250px;left:578.60px;">configuration</span>
<span class="t" id="l0" style="top:158.83px;font-size:11px;color:#000;font-weight:bold;font-family:'DejaVu Sans Condensed','DejaVu Sans','Liberation Sans',sans-serif;letter-spacing:0.042px;left:561.60px;">Maximus height</span>
<span class="t" id="v0" style="top:161.83px;font-size:11px;color:#000;font-family:'DejaVu Sans Condensed','DejaVu Sans','Liberation Sans',sans-serif;letter-spacing:-0.600px;right:31.00px;">150</span>
<span class="t" id="l1" style="top:176.83px;font-size:11px;color:#000;font-weight:bold;font-family:'DejaVu Sans Condensed','DejaVu Sans','Liberation Sans',sans-serif;letter-spacing:-0.101px;left:561.60px;">Holder height</span>
<span class="t" id="v1" style="top:179.83px;font-size:11px;color:#000;font-family:'DejaVu Sans Condensed','DejaVu Sans','Liberation Sans',sans-serif;letter-spacing:-0.600px;right:31.00px;">75</span>
<span class="t" id="l2" style="top:194.83px;font-size:11px;color:#000;font-weight:bold;font-family:'DejaVu Sans Condensed','DejaVu Sans','Liberation Sans',sans-serif;letter-spacing:0.001px;left:561.60px;">Thickness</span>
<span class="t" id="v2" style="top:197.83px;font-size:11px;color:#000;font-family:'DejaVu Sans Condensed','DejaVu Sans','Liberation Sans',sans-serif;letter-spacing:-0.600px;right:31.00px;">1,6</span>
<span class="t" id="l3" style="top:212.83px;font-size:11px;color:#000;font-weight:bold;font-family:'DejaVu Sans Condensed','DejaVu Sans','Liberation Sans',sans-serif;letter-spacing:0.031px;left:561.60px;">Air freshener diameter</span>
<span class="t" id="v3" style="top:215.83px;font-size:11px;color:#000;font-family:'DejaVu Sans Condensed','DejaVu Sans','Liberation Sans',sans-serif;letter-spacing:-0.600px;right:31.00px;">52</span>
<span class="t" id="l4" style="top:230.83px;font-size:11px;color:#000;font-weight:bold;font-family:'DejaVu Sans Condensed','DejaVu Sans','Liberation Sans',sans-serif;letter-spacing:-0.021px;left:561.60px;">Bevel degree</span>
<span class="t" id="v4" style="top:233.83px;font-size:11px;color:#000;font-family:'DejaVu Sans Condensed','DejaVu Sans','Liberation Sans',sans-serif;letter-spacing:-0.600px;right:31.00px;">30</span>
<span class="t" id="sb" style="top:717.83px;font-size:11px;color:#000;font-family:'DejaVu Sans Condensed','DejaVu Sans','Liberation Sans',sans-serif;letter-spacing:-0.068px;left:1.60px;">Viewport: translate = [ 0.07 -21.76 95.19 ], rotate = [ 50.80 0.00 313.60 ], distance = 401.52, fov = 22.50 (552x627)</span>
<span class="t" id="sv" style="top:717.83px;font-size:11px;color:#000;font-family:'DejaVu Sans Condensed','DejaVu Sans','Liberation Sans',sans-serif;letter-spacing:-0.142px;left:923.80px;">OpenSCAD 2021.01</span>
</div>

</body></html>
